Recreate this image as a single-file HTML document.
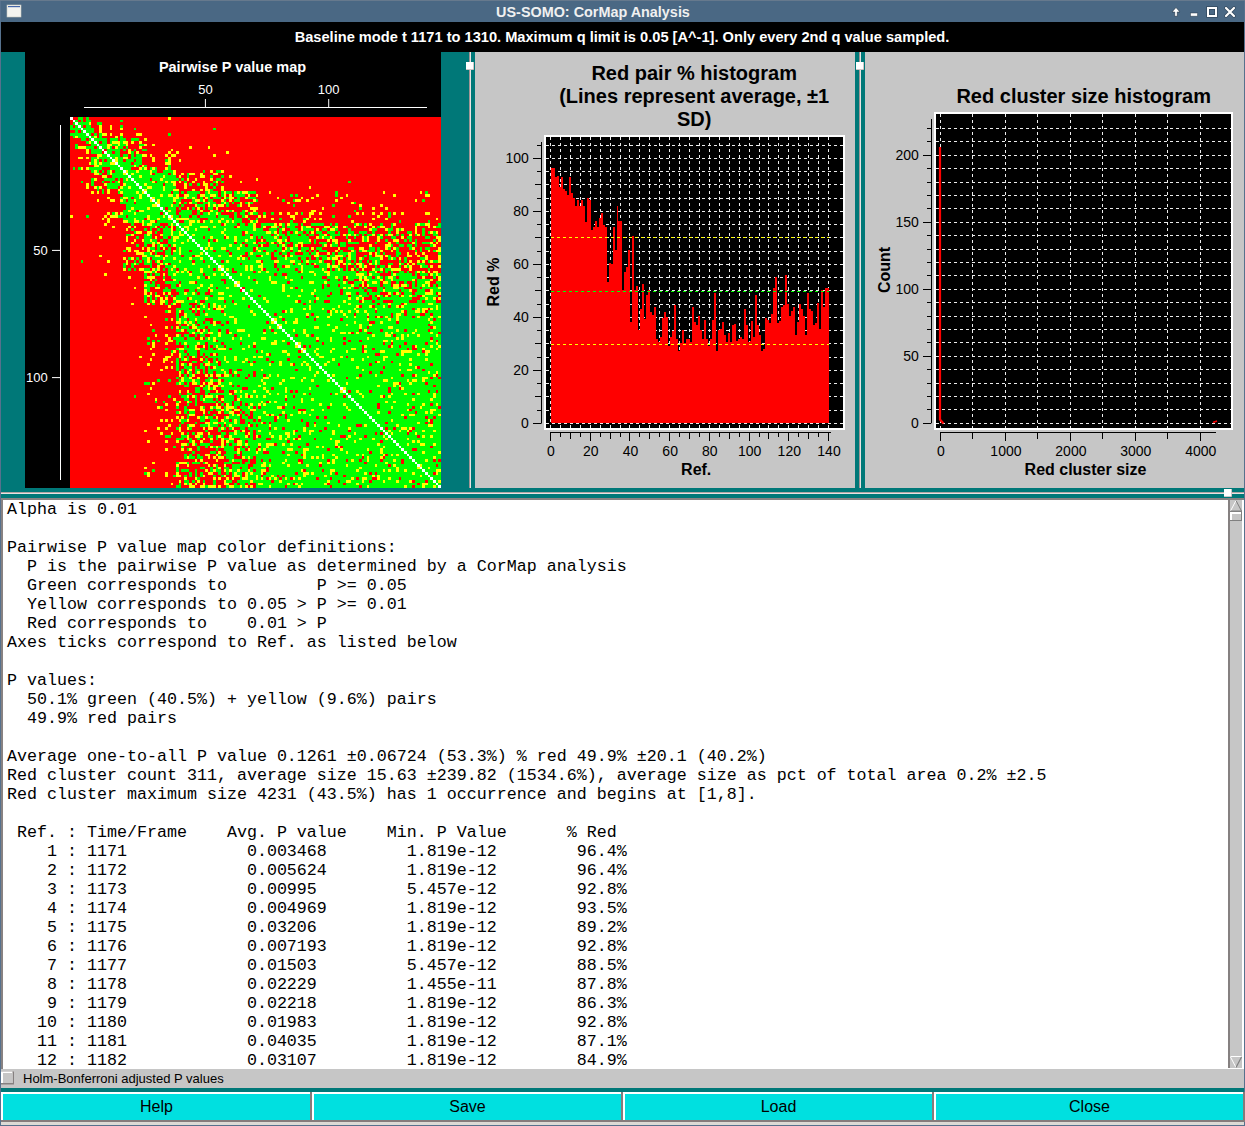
<!DOCTYPE html><html><head><meta charset="utf-8"><style>
html,body{margin:0;padding:0;width:1245px;height:1126px;overflow:hidden;background:#dcdad5}
svg{display:block}
text{white-space:pre}
.s{font-family:"Liberation Sans",sans-serif}
.m{font-family:"Liberation Mono",monospace}
</style></head><body>
<svg width="1245" height="1126" viewBox="0 0 1245 1126">

<rect x="0" y="0" width="1245" height="1126" fill="#56718d"/>
<rect x="1" y="22" width="1243" height="1103" fill="#dcdad5"/>
<rect x="1" y="1" width="1243" height="21" fill="#4a6884"/>
<rect x="0" y="0" width="1245" height="1" fill="#66798d"/>
<rect x="7" y="5" width="14" height="12" fill="#f4f4f0" stroke="#c8c8c0" stroke-width="0.6"/>
<rect x="8" y="6" width="12" height="1.2" fill="#4466aa"/>
<text class="s" x="593" y="16.5" text-anchor="middle" font-size="14.4" font-weight="bold" fill="#f0f0f0">US-SOMO: CorMap Analysis</text>
<path d="M1172 12 L1176 7.5 L1180 12 H1177.3 V16.3 H1174.7 V12 Z" fill="#fff" stroke="#1e2c3a" stroke-opacity="0.55" stroke-width="1" stroke-linejoin="round"/>
<rect x="1190.5" y="13" width="7" height="3.2" fill="#fff" stroke="#1e2c3a" stroke-opacity="0.55" stroke-width="0.8"/>
<rect x="1208" y="8" width="8" height="8" fill="none" stroke="#1e2c3a" stroke-opacity="0.55" stroke-width="3.4"/>
<rect x="1208" y="8" width="8" height="8" fill="none" stroke="#fff" stroke-width="2"/>
<path d="M1226 8 L1234 16 M1234 8 L1226 16" stroke="#1e2c3a" stroke-opacity="0.55" stroke-width="3.6" stroke-linecap="round"/>
<path d="M1226 8 L1234 16 M1234 8 L1226 16" stroke="#fff" stroke-width="2.2" stroke-linecap="round"/>
<rect x="1" y="22" width="1243" height="30" fill="#000"/>
<text class="s" x="622" y="41.7" text-anchor="middle" font-size="14.63" font-weight="bold" fill="#fff">Baseline mode t 1171 to 1310. Maximum q limit is 0.05 [A^-1]. Only every 2nd q value sampled.</text>
<rect x="1" y="52" width="1243" height="446" fill="#007878"/>
<rect x="25" y="52" width="416" height="436" fill="#000"/>
<rect x="475" y="52" width="380" height="436" fill="#c6c6c6"/>
<rect x="865" y="52" width="379" height="436" fill="#c6c6c6"/>
<rect x="469" y="52" width="1" height="436" fill="#a09494"/><rect x="470" y="52" width="1" height="436" fill="#e8e2e2"/>
<rect x="859" y="52" width="1" height="436" fill="#a09494"/><rect x="860" y="52" width="1" height="436" fill="#e8e2e2"/>
<rect x="1" y="492" width="1243" height="1" fill="#b0a4a4"/><rect x="1" y="493" width="1243" height="1" fill="#e8e2e2"/>
<g transform="translate(70 117) scale(2.65000)" shape-rendering="crispEdges">
<rect x="0" y="0" width="140" height="140" fill="#ff0000"/>
<path fill="#00ff00" d="M3 0h2v1h-2zM6 0h1v1h-1zM2 1h1v1h-1zM4 1h1v1h-1zM6 1h2v1h-2zM19 1h1v1h-1zM1 2h1v1h-1zM3 2h4v1h-4zM10 2h2v1h-2zM0 3h1v1h-1zM2 3h1v1h-1zM4 3h1v1h-1zM6 3h2v1h-2zM19 3h1v1h-1zM0 4h4v1h-4zM5 4h4v1h-4zM24 4h1v1h-1zM54 4h1v1h-1zM2 5h1v1h-1zM4 5h1v1h-1zM6 5h3v1h-3zM0 6h6v1h-6zM7 6h1v1h-1zM9 6h1v1h-1zM11 6h1v1h-1zM37 6h1v1h-1zM1 7h1v1h-1zM3 7h4v1h-4zM8 7h1v1h-1zM11 7h1v1h-1zM19 7h1v1h-1zM4 8h2v1h-2zM7 8h1v1h-1zM9 8h5v1h-5zM15 8h3v1h-3zM19 8h2v1h-2zM23 8h3v1h-3zM6 9h1v1h-1zM8 9h1v1h-1zM10 9h1v1h-1zM12 9h2v1h-2zM15 9h1v1h-1zM19 9h1v1h-1zM2 10h1v1h-1zM8 10h2v1h-2zM11 10h3v1h-3zM16 10h2v1h-2zM19 10h2v1h-2zM26 10h2v1h-2zM2 11h1v1h-1zM6 11h3v1h-3zM10 11h1v1h-1zM12 11h2v1h-2zM15 11h1v1h-1zM18 11h2v1h-2zM21 11h1v1h-1zM8 12h4v1h-4zM14 12h5v1h-5zM20 12h1v1h-1zM24 12h1v1h-1zM27 12h2v1h-2zM8 13h4v1h-4zM14 13h2v1h-2zM17 13h2v1h-2zM23 13h1v1h-1zM12 14h2v1h-2zM15 14h4v1h-4zM20 14h2v1h-2zM23 14h1v1h-1zM25 14h2v1h-2zM8 15h2v1h-2zM11 15h4v1h-4zM16 15h1v1h-1zM18 15h2v1h-2zM23 15h4v1h-4zM8 16h1v1h-1zM10 16h1v1h-1zM12 16h1v1h-1zM14 16h2v1h-2zM18 16h2v1h-2zM21 16h3v1h-3zM25 16h2v1h-2zM36 16h1v1h-1zM8 17h1v1h-1zM10 17h1v1h-1zM12 17h3v1h-3zM18 17h5v1h-5zM24 17h3v1h-3zM11 18h7v1h-7zM19 18h5v1h-5zM25 18h1v1h-1zM28 18h1v1h-1zM37 18h1v1h-1zM1 19h1v1h-1zM3 19h1v1h-1zM7 19h5v1h-5zM15 19h4v1h-4zM20 19h3v1h-3zM27 19h1v1h-1zM30 19h1v1h-1zM32 19h1v1h-1zM37 19h1v1h-1zM8 20h1v1h-1zM10 20h1v1h-1zM12 20h1v1h-1zM14 20h1v1h-1zM17 20h3v1h-3zM22 20h3v1h-3zM26 20h4v1h-4zM31 20h2v1h-2zM35 20h4v1h-4zM50 20h1v1h-1zM55 20h2v1h-2zM11 21h1v1h-1zM14 21h1v1h-1zM16 21h4v1h-4zM22 21h1v1h-1zM24 21h6v1h-6zM32 21h5v1h-5zM38 21h1v1h-1zM44 21h1v1h-1zM16 22h6v1h-6zM23 22h3v1h-3zM27 22h8v1h-8zM36 22h4v1h-4zM44 22h1v1h-1zM53 22h1v1h-1zM57 22h1v1h-1zM8 23h1v1h-1zM13 23h4v1h-4zM18 23h1v1h-1zM20 23h1v1h-1zM22 23h1v1h-1zM24 23h6v1h-6zM31 23h3v1h-3zM35 23h6v1h-6zM42 23h1v1h-1zM55 23h2v1h-2zM4 24h1v1h-1zM8 24h1v1h-1zM12 24h1v1h-1zM15 24h1v1h-1zM17 24h1v1h-1zM20 24h4v1h-4zM25 24h6v1h-6zM33 24h3v1h-3zM37 24h1v1h-1zM43 24h1v1h-1zM54 24h1v1h-1zM57 24h1v1h-1zM105 24h1v1h-1zM8 25h1v1h-1zM14 25h5v1h-5zM21 25h4v1h-4zM26 25h2v1h-2zM29 25h6v1h-6zM36 25h3v1h-3zM45 25h1v1h-1zM48 25h1v1h-1zM53 25h1v1h-1zM55 25h1v1h-1zM10 26h1v1h-1zM14 26h4v1h-4zM20 26h2v1h-2zM23 26h3v1h-3zM27 26h2v1h-2zM31 26h4v1h-4zM36 26h4v1h-4zM54 26h1v1h-1zM10 27h1v1h-1zM12 27h1v1h-1zM19 27h8v1h-8zM29 27h6v1h-6zM36 27h3v1h-3zM53 27h1v1h-1zM12 28h1v1h-1zM18 28h1v1h-1zM20 28h5v1h-5zM26 28h1v1h-1zM29 28h9v1h-9zM39 28h2v1h-2zM42 28h1v1h-1zM44 28h5v1h-5zM51 28h1v1h-1zM53 28h3v1h-3zM57 28h1v1h-1zM59 28h2v1h-2zM62 28h1v1h-1zM64 28h1v1h-1zM67 28h3v1h-3zM100 28h1v1h-1zM134 28h1v1h-1zM20 29h6v1h-6zM27 29h2v1h-2zM30 29h4v1h-4zM35 29h2v1h-2zM39 29h1v1h-1zM45 29h3v1h-3zM51 29h2v1h-2zM55 29h1v1h-1zM57 29h1v1h-1zM62 29h4v1h-4zM83 29h1v1h-1zM85 29h1v1h-1zM100 29h1v1h-1zM19 30h1v1h-1zM22 30h1v1h-1zM24 30h2v1h-2zM27 30h3v1h-3zM32 30h7v1h-7zM41 30h2v1h-2zM44 30h2v1h-2zM47 30h1v1h-1zM49 30h1v1h-1zM52 30h1v1h-1zM54 30h3v1h-3zM59 30h1v1h-1zM63 30h1v1h-1zM67 30h3v1h-3zM20 31h1v1h-1zM22 31h2v1h-2zM25 31h5v1h-5zM32 31h1v1h-1zM34 31h5v1h-5zM40 31h2v1h-2zM46 31h1v1h-1zM49 31h1v1h-1zM52 31h2v1h-2zM58 31h1v1h-1zM62 31h2v1h-2zM70 31h1v1h-1zM80 31h1v1h-1zM84 31h1v1h-1zM133 31h1v1h-1zM19 32h5v1h-5zM25 32h7v1h-7zM34 32h5v1h-5zM40 32h1v1h-1zM43 32h1v1h-1zM46 32h2v1h-2zM50 32h2v1h-2zM53 32h2v1h-2zM57 32h1v1h-1zM59 32h1v1h-1zM61 32h1v1h-1zM66 32h1v1h-1zM68 32h1v1h-1zM107 32h1v1h-1zM21 33h10v1h-10zM34 33h4v1h-4zM39 33h2v1h-2zM42 33h1v1h-1zM48 33h3v1h-3zM53 33h1v1h-1zM55 33h1v1h-1zM59 33h1v1h-1zM63 33h1v1h-1zM84 33h1v1h-1zM99 33h1v1h-1zM21 34h2v1h-2zM24 34h5v1h-5zM30 34h4v1h-4zM35 34h1v1h-1zM37 34h3v1h-3zM41 34h1v1h-1zM46 34h1v1h-1zM50 34h1v1h-1zM52 34h2v1h-2zM109 34h1v1h-1zM20 35h2v1h-2zM23 35h2v1h-2zM28 35h7v1h-7zM36 35h1v1h-1zM38 35h2v1h-2zM42 35h4v1h-4zM48 35h1v1h-1zM54 35h2v1h-2zM57 35h1v1h-1zM60 35h1v1h-1zM65 35h1v1h-1zM107 35h1v1h-1zM16 36h1v1h-1zM20 36h4v1h-4zM25 36h9v1h-9zM35 36h1v1h-1zM37 36h3v1h-3zM41 36h5v1h-5zM48 36h1v1h-1zM50 36h2v1h-2zM53 36h2v1h-2zM56 36h1v1h-1zM62 36h1v1h-1zM64 36h2v1h-2zM67 36h1v1h-1zM69 36h2v1h-2zM73 36h1v1h-1zM76 36h1v1h-1zM87 36h1v1h-1zM120 36h1v1h-1zM6 37h1v1h-1zM18 37h3v1h-3zM22 37h7v1h-7zM30 37h5v1h-5zM36 37h1v1h-1zM39 37h2v1h-2zM42 37h3v1h-3zM46 37h2v1h-2zM49 37h6v1h-6zM56 37h4v1h-4zM62 37h1v1h-1zM65 37h1v1h-1zM99 37h1v1h-1zM105 37h1v1h-1zM120 37h1v1h-1zM20 38h4v1h-4zM25 38h3v1h-3zM30 38h3v1h-3zM34 38h3v1h-3zM39 38h1v1h-1zM45 38h4v1h-4zM52 38h5v1h-5zM58 38h3v1h-3zM62 38h3v1h-3zM67 38h1v1h-1zM70 38h1v1h-1zM79 38h1v1h-1zM88 38h1v1h-1zM22 39h2v1h-2zM26 39h1v1h-1zM28 39h2v1h-2zM33 39h6v1h-6zM40 39h1v1h-1zM43 39h2v1h-2zM47 39h1v1h-1zM51 39h2v1h-2zM54 39h2v1h-2zM57 39h2v1h-2zM60 39h1v1h-1zM62 39h3v1h-3zM69 39h1v1h-1zM83 39h1v1h-1zM124 39h1v1h-1zM135 39h1v1h-1zM23 40h1v1h-1zM28 40h1v1h-1zM31 40h3v1h-3zM37 40h1v1h-1zM39 40h1v1h-1zM41 40h4v1h-4zM46 40h11v1h-11zM59 40h4v1h-4zM64 40h2v1h-2zM67 40h2v1h-2zM72 40h5v1h-5zM80 40h1v1h-1zM83 40h3v1h-3zM87 40h1v1h-1zM91 40h5v1h-5zM98 40h1v1h-1zM100 40h1v1h-1zM107 40h1v1h-1zM109 40h1v1h-1zM111 40h1v1h-1zM117 40h1v1h-1zM121 40h1v1h-1zM130 40h1v1h-1zM132 40h2v1h-2zM139 40h1v1h-1zM30 41h2v1h-2zM34 41h1v1h-1zM36 41h1v1h-1zM40 41h1v1h-1zM42 41h1v1h-1zM45 41h4v1h-4zM52 41h2v1h-2zM55 41h7v1h-7zM64 41h5v1h-5zM72 41h1v1h-1zM78 41h1v1h-1zM80 41h1v1h-1zM82 41h3v1h-3zM88 41h1v1h-1zM99 41h1v1h-1zM104 41h1v1h-1zM116 41h1v1h-1zM121 41h1v1h-1zM138 41h2v1h-2zM23 42h1v1h-1zM28 42h1v1h-1zM30 42h1v1h-1zM33 42h1v1h-1zM35 42h3v1h-3zM40 42h2v1h-2zM43 42h1v1h-1zM45 42h2v1h-2zM48 42h4v1h-4zM53 42h5v1h-5zM59 42h10v1h-10zM70 42h3v1h-3zM75 42h3v1h-3zM79 42h1v1h-1zM83 42h3v1h-3zM88 42h4v1h-4zM95 42h2v1h-2zM100 42h1v1h-1zM105 42h1v1h-1zM114 42h2v1h-2zM120 42h2v1h-2zM124 42h1v1h-1zM133 42h1v1h-1zM24 43h1v1h-1zM32 43h1v1h-1zM35 43h3v1h-3zM39 43h2v1h-2zM42 43h1v1h-1zM44 43h13v1h-13zM58 43h7v1h-7zM67 43h7v1h-7zM76 43h1v1h-1zM79 43h1v1h-1zM82 43h1v1h-1zM84 43h1v1h-1zM86 43h2v1h-2zM89 43h1v1h-1zM93 43h2v1h-2zM97 43h3v1h-3zM101 43h1v1h-1zM105 43h2v1h-2zM109 43h3v1h-3zM114 43h1v1h-1zM120 43h1v1h-1zM127 43h2v1h-2zM133 43h1v1h-1zM135 43h1v1h-1zM137 43h1v1h-1zM21 44h2v1h-2zM28 44h1v1h-1zM30 44h1v1h-1zM35 44h3v1h-3zM39 44h2v1h-2zM43 44h1v1h-1zM45 44h1v1h-1zM47 44h11v1h-11zM59 44h6v1h-6zM66 44h2v1h-2zM69 44h7v1h-7zM77 44h1v1h-1zM79 44h2v1h-2zM82 44h4v1h-4zM87 44h2v1h-2zM90 44h2v1h-2zM94 44h2v1h-2zM98 44h4v1h-4zM104 44h1v1h-1zM106 44h1v1h-1zM108 44h1v1h-1zM110 44h1v1h-1zM112 44h2v1h-2zM116 44h1v1h-1zM119 44h1v1h-1zM123 44h1v1h-1zM125 44h1v1h-1zM130 44h1v1h-1zM133 44h1v1h-1zM137 44h2v1h-2zM25 45h1v1h-1zM28 45h3v1h-3zM35 45h2v1h-2zM38 45h1v1h-1zM41 45h4v1h-4zM46 45h4v1h-4zM51 45h2v1h-2zM54 45h4v1h-4zM60 45h2v1h-2zM63 45h5v1h-5zM69 45h1v1h-1zM71 45h1v1h-1zM73 45h4v1h-4zM78 45h1v1h-1zM80 45h2v1h-2zM83 45h7v1h-7zM94 45h1v1h-1zM96 45h2v1h-2zM99 45h1v1h-1zM104 45h1v1h-1zM107 45h1v1h-1zM111 45h1v1h-1zM117 45h1v1h-1zM121 45h2v1h-2zM127 45h2v1h-2zM134 45h2v1h-2zM28 46h2v1h-2zM31 46h2v1h-2zM34 46h1v1h-1zM37 46h2v1h-2zM40 46h4v1h-4zM45 46h1v1h-1zM47 46h5v1h-5zM53 46h1v1h-1zM56 46h6v1h-6zM63 46h3v1h-3zM67 46h3v1h-3zM74 46h4v1h-4zM80 46h1v1h-1zM83 46h7v1h-7zM92 46h1v1h-1zM111 46h1v1h-1zM119 46h1v1h-1zM126 46h1v1h-1zM128 46h1v1h-1zM130 46h1v1h-1zM137 46h1v1h-1zM28 47h3v1h-3zM32 47h1v1h-1zM37 47h5v1h-5zM43 47h4v1h-4zM48 47h4v1h-4zM53 47h9v1h-9zM63 47h2v1h-2zM66 47h3v1h-3zM71 47h3v1h-3zM75 47h1v1h-1zM78 47h1v1h-1zM81 47h2v1h-2zM84 47h2v1h-2zM88 47h3v1h-3zM92 47h1v1h-1zM94 47h3v1h-3zM99 47h1v1h-1zM102 47h2v1h-2zM105 47h4v1h-4zM115 47h1v1h-1zM123 47h1v1h-1zM130 47h1v1h-1zM133 47h3v1h-3zM25 48h1v1h-1zM28 48h1v1h-1zM33 48h1v1h-1zM35 48h2v1h-2zM38 48h1v1h-1zM40 48h8v1h-8zM49 48h3v1h-3zM53 48h7v1h-7zM61 48h3v1h-3zM65 48h1v1h-1zM67 48h4v1h-4zM75 48h3v1h-3zM79 48h1v1h-1zM81 48h1v1h-1zM84 48h1v1h-1zM95 48h1v1h-1zM99 48h2v1h-2zM102 48h2v1h-2zM121 48h1v1h-1zM124 48h2v1h-2zM127 48h2v1h-2zM130 48h1v1h-1zM136 48h1v1h-1zM30 49h2v1h-2zM33 49h1v1h-1zM37 49h1v1h-1zM40 49h1v1h-1zM42 49h7v1h-7zM50 49h1v1h-1zM52 49h1v1h-1zM54 49h3v1h-3zM59 49h4v1h-4zM64 49h5v1h-5zM71 49h9v1h-9zM82 49h1v1h-1zM84 49h2v1h-2zM87 49h3v1h-3zM93 49h2v1h-2zM105 49h2v1h-2zM113 49h2v1h-2zM116 49h1v1h-1zM120 49h1v1h-1zM123 49h1v1h-1zM128 49h1v1h-1zM132 49h1v1h-1zM134 49h2v1h-2zM20 50h1v1h-1zM32 50h3v1h-3zM36 50h2v1h-2zM40 50h1v1h-1zM42 50h3v1h-3zM46 50h4v1h-4zM51 50h3v1h-3zM55 50h4v1h-4zM60 50h9v1h-9zM70 50h1v1h-1zM72 50h1v1h-1zM74 50h3v1h-3zM78 50h2v1h-2zM81 50h2v1h-2zM84 50h2v1h-2zM87 50h2v1h-2zM90 50h1v1h-1zM92 50h1v1h-1zM94 50h3v1h-3zM102 50h1v1h-1zM107 50h1v1h-1zM109 50h1v1h-1zM112 50h3v1h-3zM116 50h1v1h-1zM123 50h1v1h-1zM130 50h1v1h-1zM132 50h1v1h-1zM137 50h1v1h-1zM28 51h2v1h-2zM32 51h1v1h-1zM36 51h2v1h-2zM39 51h2v1h-2zM42 51h7v1h-7zM50 51h1v1h-1zM52 51h8v1h-8zM61 51h5v1h-5zM67 51h1v1h-1zM69 51h5v1h-5zM75 51h1v1h-1zM77 51h2v1h-2zM80 51h2v1h-2zM83 51h2v1h-2zM88 51h2v1h-2zM91 51h2v1h-2zM99 51h1v1h-1zM101 51h4v1h-4zM106 51h2v1h-2zM116 51h1v1h-1zM118 51h1v1h-1zM123 51h2v1h-2zM139 51h1v1h-1zM29 52h3v1h-3zM34 52h1v1h-1zM37 52h5v1h-5zM43 52h3v1h-3zM49 52h3v1h-3zM53 52h3v1h-3zM57 52h3v1h-3zM61 52h3v1h-3zM67 52h3v1h-3zM73 52h3v1h-3zM77 52h3v1h-3zM84 52h7v1h-7zM94 52h3v1h-3zM98 52h2v1h-2zM103 52h1v1h-1zM106 52h2v1h-2zM111 52h1v1h-1zM113 52h1v1h-1zM120 52h1v1h-1zM123 52h1v1h-1zM22 53h1v1h-1zM25 53h1v1h-1zM27 53h2v1h-2zM31 53h4v1h-4zM36 53h3v1h-3zM40 53h5v1h-5zM46 53h3v1h-3zM50 53h3v1h-3zM54 53h9v1h-9zM64 53h1v1h-1zM66 53h1v1h-1zM68 53h8v1h-8zM78 53h3v1h-3zM82 53h4v1h-4zM87 53h2v1h-2zM90 53h1v1h-1zM93 53h1v1h-1zM95 53h2v1h-2zM98 53h1v1h-1zM102 53h1v1h-1zM104 53h1v1h-1zM106 53h2v1h-2zM110 53h1v1h-1zM113 53h4v1h-4zM120 53h1v1h-1zM122 53h1v1h-1zM126 53h1v1h-1zM132 53h2v1h-2zM4 54h1v1h-1zM24 54h1v1h-1zM26 54h1v1h-1zM28 54h1v1h-1zM30 54h1v1h-1zM32 54h1v1h-1zM35 54h6v1h-6zM42 54h4v1h-4zM47 54h3v1h-3zM51 54h3v1h-3zM55 54h2v1h-2zM58 54h1v1h-1zM60 54h10v1h-10zM73 54h4v1h-4zM79 54h4v1h-4zM85 54h2v1h-2zM88 54h1v1h-1zM90 54h4v1h-4zM95 54h1v1h-1zM99 54h1v1h-1zM104 54h2v1h-2zM107 54h1v1h-1zM109 54h1v1h-1zM112 54h1v1h-1zM114 54h1v1h-1zM116 54h1v1h-1zM124 54h1v1h-1zM126 54h1v1h-1zM135 54h1v1h-1zM137 54h2v1h-2zM20 55h1v1h-1zM23 55h1v1h-1zM25 55h1v1h-1zM28 55h3v1h-3zM33 55h1v1h-1zM35 55h1v1h-1zM38 55h8v1h-8zM47 55h8v1h-8zM56 55h8v1h-8zM65 55h7v1h-7zM73 55h4v1h-4zM78 55h6v1h-6zM85 55h1v1h-1zM87 55h2v1h-2zM90 55h1v1h-1zM93 55h4v1h-4zM99 55h1v1h-1zM104 55h1v1h-1zM106 55h1v1h-1zM110 55h1v1h-1zM114 55h1v1h-1zM116 55h1v1h-1zM120 55h2v1h-2zM125 55h1v1h-1zM131 55h3v1h-3zM20 56h1v1h-1zM23 56h1v1h-1zM30 56h1v1h-1zM36 56h3v1h-3zM40 56h12v1h-12zM53 56h3v1h-3zM58 56h8v1h-8zM67 56h1v1h-1zM69 56h2v1h-2zM73 56h4v1h-4zM78 56h2v1h-2zM83 56h4v1h-4zM88 56h4v1h-4zM94 56h3v1h-3zM98 56h1v1h-1zM101 56h1v1h-1zM104 56h1v1h-1zM107 56h1v1h-1zM110 56h1v1h-1zM115 56h1v1h-1zM117 56h2v1h-2zM124 56h1v1h-1zM127 56h1v1h-1zM133 56h2v1h-2zM22 57h1v1h-1zM24 57h1v1h-1zM28 57h2v1h-2zM32 57h1v1h-1zM35 57h1v1h-1zM37 57h1v1h-1zM39 57h1v1h-1zM41 57h2v1h-2zM44 57h5v1h-5zM50 57h4v1h-4zM55 57h1v1h-1zM58 57h1v1h-1zM60 57h1v1h-1zM62 57h4v1h-4zM67 57h1v1h-1zM69 57h3v1h-3zM74 57h4v1h-4zM79 57h6v1h-6zM86 57h1v1h-1zM88 57h7v1h-7zM96 57h1v1h-1zM98 57h1v1h-1zM100 57h1v1h-1zM102 57h1v1h-1zM104 57h1v1h-1zM108 57h1v1h-1zM115 57h2v1h-2zM119 57h2v1h-2zM135 57h1v1h-1zM31 58h1v1h-1zM37 58h3v1h-3zM41 58h1v1h-1zM43 58h1v1h-1zM46 58h3v1h-3zM50 58h8v1h-8zM59 58h2v1h-2zM63 58h6v1h-6zM70 58h1v1h-1zM72 58h2v1h-2zM75 58h11v1h-11zM88 58h2v1h-2zM92 58h4v1h-4zM98 58h10v1h-10zM109 58h3v1h-3zM113 58h2v1h-2zM117 58h1v1h-1zM119 58h1v1h-1zM121 58h1v1h-1zM124 58h2v1h-2zM127 58h1v1h-1zM130 58h1v1h-1zM132 58h1v1h-1zM28 59h1v1h-1zM30 59h1v1h-1zM32 59h2v1h-2zM37 59h2v1h-2zM40 59h5v1h-5zM46 59h4v1h-4zM51 59h3v1h-3zM55 59h2v1h-2zM58 59h1v1h-1zM60 59h4v1h-4zM65 59h12v1h-12zM78 59h2v1h-2zM82 59h10v1h-10zM93 59h4v1h-4zM98 59h10v1h-10zM111 59h1v1h-1zM114 59h3v1h-3zM121 59h1v1h-1zM123 59h6v1h-6zM130 59h1v1h-1zM132 59h3v1h-3zM137 59h1v1h-1zM139 59h1v1h-1zM28 60h1v1h-1zM35 60h1v1h-1zM38 60h10v1h-10zM49 60h2v1h-2zM53 60h7v1h-7zM61 60h6v1h-6zM68 60h7v1h-7zM76 60h5v1h-5zM82 60h5v1h-5zM88 60h7v1h-7zM97 60h3v1h-3zM101 60h2v1h-2zM105 60h4v1h-4zM110 60h1v1h-1zM112 60h2v1h-2zM115 60h1v1h-1zM117 60h1v1h-1zM119 60h1v1h-1zM122 60h1v1h-1zM124 60h7v1h-7zM137 60h1v1h-1zM32 61h1v1h-1zM40 61h17v1h-17zM59 61h2v1h-2zM62 61h7v1h-7zM70 61h5v1h-5zM76 61h7v1h-7zM84 61h13v1h-13zM98 61h3v1h-3zM102 61h1v1h-1zM105 61h2v1h-2zM113 61h4v1h-4zM119 61h2v1h-2zM122 61h7v1h-7zM131 61h5v1h-5zM28 62h2v1h-2zM31 62h1v1h-1zM36 62h5v1h-5zM42 62h3v1h-3zM48 62h10v1h-10zM59 62h3v1h-3zM64 62h6v1h-6zM71 62h5v1h-5zM78 62h4v1h-4zM83 62h7v1h-7zM92 62h4v1h-4zM97 62h6v1h-6zM104 62h1v1h-1zM107 62h3v1h-3zM112 62h2v1h-2zM116 62h1v1h-1zM120 62h1v1h-1zM123 62h1v1h-1zM126 62h1v1h-1zM129 62h1v1h-1zM131 62h3v1h-3zM138 62h2v1h-2zM29 63h3v1h-3zM33 63h1v1h-1zM38 63h2v1h-2zM42 63h7v1h-7zM50 63h3v1h-3zM54 63h8v1h-8zM64 63h16v1h-16zM81 63h14v1h-14zM96 63h1v1h-1zM98 63h3v1h-3zM102 63h4v1h-4zM107 63h2v1h-2zM113 63h4v1h-4zM118 63h3v1h-3zM127 63h1v1h-1zM129 63h1v1h-1zM131 63h2v1h-2zM134 63h1v1h-1zM137 63h1v1h-1zM139 63h1v1h-1zM28 64h2v1h-2zM36 64h1v1h-1zM38 64h10v1h-10zM49 64h3v1h-3zM53 64h2v1h-2zM56 64h3v1h-3zM60 64h4v1h-4zM66 64h14v1h-14zM81 64h2v1h-2zM84 64h1v1h-1zM86 64h9v1h-9zM96 64h7v1h-7zM104 64h1v1h-1zM106 64h1v1h-1zM109 64h1v1h-1zM111 64h1v1h-1zM116 64h2v1h-2zM119 64h3v1h-3zM124 64h2v1h-2zM129 64h3v1h-3zM133 64h6v1h-6zM29 65h1v1h-1zM35 65h3v1h-3zM40 65h3v1h-3zM45 65h2v1h-2zM48 65h4v1h-4zM54 65h10v1h-10zM66 65h2v1h-2zM69 65h11v1h-11zM81 65h6v1h-6zM88 65h4v1h-4zM93 65h9v1h-9zM103 65h8v1h-8zM112 65h2v1h-2zM116 65h2v1h-2zM119 65h5v1h-5zM125 65h3v1h-3zM131 65h3v1h-3zM137 65h3v1h-3zM32 66h1v1h-1zM41 66h2v1h-2zM44 66h2v1h-2zM47 66h1v1h-1zM49 66h2v1h-2zM53 66h3v1h-3zM58 66h8v1h-8zM67 66h24v1h-24zM92 66h6v1h-6zM99 66h3v1h-3zM103 66h1v1h-1zM106 66h2v1h-2zM109 66h3v1h-3zM113 66h4v1h-4zM121 66h1v1h-1zM124 66h1v1h-1zM126 66h3v1h-3zM130 66h4v1h-4zM137 66h1v1h-1zM28 67h1v1h-1zM30 67h1v1h-1zM36 67h1v1h-1zM38 67h1v1h-1zM40 67h13v1h-13zM54 67h6v1h-6zM61 67h6v1h-6zM68 67h3v1h-3zM72 67h10v1h-10zM83 67h3v1h-3zM87 67h5v1h-5zM93 67h4v1h-4zM98 67h7v1h-7zM106 67h3v1h-3zM110 67h3v1h-3zM114 67h1v1h-1zM117 67h1v1h-1zM121 67h3v1h-3zM126 67h2v1h-2zM129 67h2v1h-2zM134 67h5v1h-5zM28 68h1v1h-1zM30 68h1v1h-1zM32 68h1v1h-1zM40 68h4v1h-4zM46 68h5v1h-5zM52 68h4v1h-4zM58 68h7v1h-7zM66 68h2v1h-2zM69 68h4v1h-4zM74 68h19v1h-19zM94 68h11v1h-11zM106 68h2v1h-2zM109 68h1v1h-1zM114 68h2v1h-2zM117 68h12v1h-12zM132 68h2v1h-2zM135 68h2v1h-2zM28 69h1v1h-1zM30 69h1v1h-1zM36 69h1v1h-1zM39 69h1v1h-1zM43 69h4v1h-4zM48 69h1v1h-1zM51 69h7v1h-7zM59 69h2v1h-2zM62 69h7v1h-7zM70 69h4v1h-4zM75 69h10v1h-10zM87 69h3v1h-3zM91 69h1v1h-1zM93 69h3v1h-3zM98 69h5v1h-5zM104 69h5v1h-5zM111 69h3v1h-3zM115 69h3v1h-3zM122 69h6v1h-6zM131 69h2v1h-2zM134 69h4v1h-4zM31 70h1v1h-1zM36 70h1v1h-1zM38 70h1v1h-1zM42 70h3v1h-3zM48 70h1v1h-1zM50 70h2v1h-2zM53 70h1v1h-1zM55 70h7v1h-7zM63 70h7v1h-7zM71 70h17v1h-17zM89 70h16v1h-16zM106 70h10v1h-10zM117 70h3v1h-3zM121 70h4v1h-4zM127 70h8v1h-8zM137 70h3v1h-3zM42 71h4v1h-4zM47 71h1v1h-1zM49 71h1v1h-1zM51 71h1v1h-1zM53 71h1v1h-1zM55 71h1v1h-1zM57 71h1v1h-1zM59 71h8v1h-8zM68 71h3v1h-3zM72 71h18v1h-18zM91 71h10v1h-10zM102 71h6v1h-6zM110 71h3v1h-3zM115 71h3v1h-3zM119 71h1v1h-1zM121 71h2v1h-2zM126 71h12v1h-12zM139 71h1v1h-1zM40 72h5v1h-5zM47 72h1v1h-1zM49 72h3v1h-3zM53 72h1v1h-1zM58 72h14v1h-14zM73 72h10v1h-10zM84 72h4v1h-4zM89 72h1v1h-1zM91 72h4v1h-4zM96 72h3v1h-3zM100 72h7v1h-7zM108 72h7v1h-7zM116 72h13v1h-13zM130 72h1v1h-1zM132 72h1v1h-1zM137 72h1v1h-1zM139 72h1v1h-1zM36 73h1v1h-1zM40 73h1v1h-1zM43 73h3v1h-3zM47 73h1v1h-1zM49 73h1v1h-1zM51 73h6v1h-6zM58 73h10v1h-10zM69 73h4v1h-4zM74 73h6v1h-6zM82 73h1v1h-1zM84 73h13v1h-13zM99 73h1v1h-1zM101 73h1v1h-1zM103 73h2v1h-2zM106 73h2v1h-2zM109 73h2v1h-2zM112 73h3v1h-3zM116 73h9v1h-9zM127 73h3v1h-3zM132 73h1v1h-1zM135 73h5v1h-5zM40 74h1v1h-1zM44 74h3v1h-3zM49 74h2v1h-2zM52 74h6v1h-6zM59 74h10v1h-10zM70 74h4v1h-4zM75 74h2v1h-2zM78 74h11v1h-11zM90 74h1v1h-1zM92 74h6v1h-6zM99 74h4v1h-4zM104 74h3v1h-3zM108 74h4v1h-4zM113 74h8v1h-8zM122 74h1v1h-1zM125 74h1v1h-1zM127 74h5v1h-5zM134 74h2v1h-2zM137 74h3v1h-3zM40 75h1v1h-1zM42 75h1v1h-1zM44 75h16v1h-16zM62 75h13v1h-13zM76 75h3v1h-3zM80 75h9v1h-9zM90 75h3v1h-3zM94 75h3v1h-3zM98 75h6v1h-6zM105 75h2v1h-2zM108 75h4v1h-4zM113 75h2v1h-2zM118 75h1v1h-1zM120 75h1v1h-1zM122 75h1v1h-1zM124 75h5v1h-5zM130 75h1v1h-1zM132 75h4v1h-4zM137 75h2v1h-2zM36 76h1v1h-1zM40 76h1v1h-1zM42 76h2v1h-2zM45 76h2v1h-2zM48 76h3v1h-3zM54 76h8v1h-8zM63 76h13v1h-13zM78 76h2v1h-2zM81 76h4v1h-4zM86 76h6v1h-6zM93 76h9v1h-9zM103 76h9v1h-9zM113 76h7v1h-7zM121 76h2v1h-2zM124 76h11v1h-11zM136 76h1v1h-1zM138 76h2v1h-2zM42 77h1v1h-1zM44 77h1v1h-1zM46 77h1v1h-1zM48 77h2v1h-2zM51 77h2v1h-2zM57 77h2v1h-2zM60 77h2v1h-2zM63 77h11v1h-11zM75 77h1v1h-1zM78 77h3v1h-3zM82 77h2v1h-2zM86 77h21v1h-21zM108 77h5v1h-5zM115 77h2v1h-2zM118 77h5v1h-5zM124 77h12v1h-12zM137 77h3v1h-3zM41 78h1v1h-1zM45 78h1v1h-1zM47 78h1v1h-1zM49 78h5v1h-5zM55 78h2v1h-2zM58 78h20v1h-20zM80 78h17v1h-17zM98 78h6v1h-6zM105 78h4v1h-4zM110 78h3v1h-3zM114 78h21v1h-21zM136 78h4v1h-4zM38 79h1v1h-1zM42 79h3v1h-3zM48 79h3v1h-3zM52 79h23v1h-23zM76 79h2v1h-2zM80 79h12v1h-12zM94 79h6v1h-6zM101 79h8v1h-8zM110 79h2v1h-2zM113 79h7v1h-7zM122 79h14v1h-14zM138 79h2v1h-2zM31 80h1v1h-1zM40 80h2v1h-2zM44 80h3v1h-3zM51 80h1v1h-1zM53 80h3v1h-3zM57 80h2v1h-2zM60 80h3v1h-3zM66 80h7v1h-7zM74 80h2v1h-2zM77 80h3v1h-3zM81 80h3v1h-3zM85 80h3v1h-3zM89 80h10v1h-10zM100 80h9v1h-9zM110 80h1v1h-1zM112 80h5v1h-5zM118 80h5v1h-5zM124 80h2v1h-2zM127 80h3v1h-3zM131 80h4v1h-4zM136 80h4v1h-4zM45 81h1v1h-1zM47 81h2v1h-2zM50 81h2v1h-2zM54 81h2v1h-2zM57 81h2v1h-2zM61 81h12v1h-12zM74 81h3v1h-3zM78 81h3v1h-3zM82 81h6v1h-6zM89 81h13v1h-13zM104 81h1v1h-1zM107 81h1v1h-1zM109 81h3v1h-3zM114 81h5v1h-5zM120 81h1v1h-1zM122 81h7v1h-7zM130 81h6v1h-6zM137 81h2v1h-2zM41 82h1v1h-1zM43 82h2v1h-2zM47 82h1v1h-1zM49 82h2v1h-2zM53 82h3v1h-3zM57 82h5v1h-5zM63 82h4v1h-4zM68 82h14v1h-14zM83 82h2v1h-2zM86 82h3v1h-3zM90 82h1v1h-1zM92 82h22v1h-22zM115 82h4v1h-4zM121 82h1v1h-1zM123 82h2v1h-2zM126 82h1v1h-1zM128 82h3v1h-3zM132 82h6v1h-6zM139 82h1v1h-1zM29 83h1v1h-1zM39 83h4v1h-4zM44 83h3v1h-3zM51 83h1v1h-1zM53 83h1v1h-1zM55 83h6v1h-6zM62 83h2v1h-2zM65 83h7v1h-7zM74 83h9v1h-9zM84 83h9v1h-9zM94 83h4v1h-4zM99 83h4v1h-4zM104 83h8v1h-8zM113 83h10v1h-10zM124 83h1v1h-1zM126 83h10v1h-10zM137 83h3v1h-3zM31 84h1v1h-1zM33 84h1v1h-1zM40 84h14v1h-14zM56 84h21v1h-21zM78 84h2v1h-2zM81 84h3v1h-3zM85 84h8v1h-8zM94 84h4v1h-4zM99 84h6v1h-6zM106 84h3v1h-3zM110 84h8v1h-8zM120 84h1v1h-1zM122 84h14v1h-14zM137 84h1v1h-1zM139 84h1v1h-1zM29 85h1v1h-1zM40 85h1v1h-1zM42 85h1v1h-1zM44 85h4v1h-4zM49 85h2v1h-2zM52 85h5v1h-5zM58 85h6v1h-6zM65 85h4v1h-4zM70 85h6v1h-6zM78 85h4v1h-4zM83 85h2v1h-2zM87 85h8v1h-8zM96 85h7v1h-7zM104 85h14v1h-14zM119 85h2v1h-2zM122 85h4v1h-4zM127 85h7v1h-7zM135 85h3v1h-3zM139 85h1v1h-1zM43 86h1v1h-1zM45 86h2v1h-2zM52 86h1v1h-1zM54 86h1v1h-1zM56 86h2v1h-2zM59 86h8v1h-8zM68 86h1v1h-1zM70 86h15v1h-15zM87 86h1v1h-1zM89 86h1v1h-1zM91 86h19v1h-19zM112 86h8v1h-8zM122 86h2v1h-2zM125 86h4v1h-4zM131 86h5v1h-5zM137 86h2v1h-2zM36 87h1v1h-1zM40 87h1v1h-1zM43 87h4v1h-4zM49 87h2v1h-2zM52 87h2v1h-2zM55 87h1v1h-1zM59 87h1v1h-1zM61 87h4v1h-4zM66 87h21v1h-21zM89 87h4v1h-4zM94 87h5v1h-5zM100 87h6v1h-6zM108 87h2v1h-2zM111 87h3v1h-3zM115 87h12v1h-12zM128 87h1v1h-1zM131 87h2v1h-2zM134 87h4v1h-4zM139 87h1v1h-1zM38 88h1v1h-1zM41 88h2v1h-2zM44 88h4v1h-4zM49 88h21v1h-21zM71 88h1v1h-1zM73 88h7v1h-7zM82 88h4v1h-4zM89 88h3v1h-3zM93 88h5v1h-5zM99 88h5v1h-5zM105 88h5v1h-5zM112 88h5v1h-5zM119 88h6v1h-6zM129 88h4v1h-4zM136 88h4v1h-4zM42 89h2v1h-2zM45 89h3v1h-3zM49 89h1v1h-1zM51 89h2v1h-2zM56 89h18v1h-18zM76 89h6v1h-6zM83 89h6v1h-6zM90 89h3v1h-3zM94 89h21v1h-21zM117 89h6v1h-6zM124 89h1v1h-1zM126 89h5v1h-5zM132 89h2v1h-2zM135 89h5v1h-5zM42 90h1v1h-1zM44 90h1v1h-1zM47 90h1v1h-1zM50 90h1v1h-1zM52 90h6v1h-6zM59 90h3v1h-3zM63 90h6v1h-6zM70 90h1v1h-1zM73 90h13v1h-13zM87 90h3v1h-3zM91 90h3v1h-3zM96 90h6v1h-6zM103 90h1v1h-1zM105 90h7v1h-7zM113 90h5v1h-5zM120 90h20v1h-20zM40 91h1v1h-1zM42 91h1v1h-1zM44 91h1v1h-1zM51 91h1v1h-1zM54 91h1v1h-1zM56 91h2v1h-2zM59 91h3v1h-3zM63 91h3v1h-3zM67 91h7v1h-7zM75 91h7v1h-7zM83 91h8v1h-8zM92 91h7v1h-7zM100 91h6v1h-6zM107 91h3v1h-3zM111 91h7v1h-7zM119 91h9v1h-9zM129 91h5v1h-5zM135 91h5v1h-5zM40 92h1v1h-1zM46 92h2v1h-2zM50 92h2v1h-2zM54 92h1v1h-1zM57 92h2v1h-2zM60 92h5v1h-5zM66 92h1v1h-1zM68 92h1v1h-1zM70 92h6v1h-6zM77 92h2v1h-2zM80 92h8v1h-8zM89 92h3v1h-3zM93 92h4v1h-4zM98 92h17v1h-17zM117 92h4v1h-4zM122 92h18v1h-18zM40 93h1v1h-1zM43 93h1v1h-1zM49 93h1v1h-1zM53 93h3v1h-3zM57 93h11v1h-11zM69 93h6v1h-6zM76 93h3v1h-3zM80 93h3v1h-3zM85 93h2v1h-2zM88 93h1v1h-1zM90 93h3v1h-3zM94 93h2v1h-2zM97 93h4v1h-4zM102 93h11v1h-11zM114 93h10v1h-10zM125 93h3v1h-3zM129 93h7v1h-7zM137 93h3v1h-3zM40 94h1v1h-1zM43 94h3v1h-3zM47 94h1v1h-1zM49 94h2v1h-2zM52 94h1v1h-1zM55 94h35v1h-35zM91 94h3v1h-3zM95 94h13v1h-13zM109 94h9v1h-9zM119 94h11v1h-11zM132 94h8v1h-8zM40 95h1v1h-1zM42 95h1v1h-1zM44 95h1v1h-1zM47 95h2v1h-2zM50 95h1v1h-1zM52 95h5v1h-5zM58 95h2v1h-2zM61 95h2v1h-2zM65 95h7v1h-7zM73 95h12v1h-12zM86 95h4v1h-4zM91 95h4v1h-4zM96 95h14v1h-14zM111 95h13v1h-13zM125 95h2v1h-2zM129 95h4v1h-4zM134 95h6v1h-6zM42 96h1v1h-1zM45 96h1v1h-1zM47 96h1v1h-1zM50 96h1v1h-1zM52 96h2v1h-2zM55 96h3v1h-3zM59 96h1v1h-1zM61 96h1v1h-1zM63 96h6v1h-6zM70 96h23v1h-23zM94 96h2v1h-2zM97 96h16v1h-16zM114 96h3v1h-3zM118 96h17v1h-17zM136 96h2v1h-2zM139 96h1v1h-1zM43 97h1v1h-1zM45 97h1v1h-1zM60 97h1v1h-1zM62 97h1v1h-1zM64 97h3v1h-3zM68 97h1v1h-1zM70 97h3v1h-3zM74 97h1v1h-1zM76 97h2v1h-2zM79 97h13v1h-13zM93 97h4v1h-4zM98 97h1v1h-1zM100 97h9v1h-9zM110 97h5v1h-5zM116 97h9v1h-9zM126 97h3v1h-3zM131 97h6v1h-6zM139 97h1v1h-1zM40 98h1v1h-1zM43 98h2v1h-2zM52 98h2v1h-2zM56 98h10v1h-10zM67 98h6v1h-6zM75 98h8v1h-8zM85 98h3v1h-3zM89 98h9v1h-9zM99 98h5v1h-5zM105 98h3v1h-3zM109 98h12v1h-12zM122 98h11v1h-11zM135 98h1v1h-1zM137 98h2v1h-2zM33 99h1v1h-1zM37 99h1v1h-1zM41 99h1v1h-1zM43 99h3v1h-3zM47 99h2v1h-2zM51 99h2v1h-2zM54 99h2v1h-2zM58 99h14v1h-14zM73 99h7v1h-7zM81 99h6v1h-6zM88 99h3v1h-3zM92 99h5v1h-5zM98 99h1v1h-1zM100 99h18v1h-18zM120 99h7v1h-7zM128 99h1v1h-1zM131 99h2v1h-2zM134 99h6v1h-6zM28 100h2v1h-2zM40 100h1v1h-1zM42 100h1v1h-1zM44 100h1v1h-1zM48 100h1v1h-1zM57 100h3v1h-3zM61 100h12v1h-12zM74 100h5v1h-5zM80 100h20v1h-20zM101 100h3v1h-3zM105 100h17v1h-17zM125 100h3v1h-3zM129 100h5v1h-5zM135 100h5v1h-5zM43 101h2v1h-2zM51 101h1v1h-1zM56 101h1v1h-1zM58 101h3v1h-3zM62 101h1v1h-1zM64 101h7v1h-7zM72 101h21v1h-21zM94 101h7v1h-7zM102 101h14v1h-14zM117 101h5v1h-5zM123 101h1v1h-1zM125 101h12v1h-12zM138 101h2v1h-2zM47 102h2v1h-2zM50 102h2v1h-2zM53 102h1v1h-1zM57 102h8v1h-8zM67 102h6v1h-6zM74 102h2v1h-2zM77 102h4v1h-4zM82 102h8v1h-8zM91 102h11v1h-11zM104 102h16v1h-16zM121 102h3v1h-3zM126 102h14v1h-14zM47 103h2v1h-2zM51 103h2v1h-2zM58 103h2v1h-2zM63 103h1v1h-1zM65 103h4v1h-4zM70 103h4v1h-4zM75 103h6v1h-6zM82 103h1v1h-1zM84 103h1v1h-1zM86 103h16v1h-16zM104 103h1v1h-1zM106 103h2v1h-2zM109 103h4v1h-4zM114 103h6v1h-6zM121 103h14v1h-14zM136 103h2v1h-2zM139 103h1v1h-1zM41 104h1v1h-1zM44 104h2v1h-2zM51 104h1v1h-1zM53 104h7v1h-7zM62 104h4v1h-4zM67 104h8v1h-8zM76 104h2v1h-2zM79 104h9v1h-9zM89 104h1v1h-1zM91 104h7v1h-7zM99 104h1v1h-1zM101 104h3v1h-3zM105 104h4v1h-4zM110 104h11v1h-11zM122 104h4v1h-4zM127 104h2v1h-2zM130 104h1v1h-1zM132 104h5v1h-5zM138 104h2v1h-2zM24 105h1v1h-1zM37 105h1v1h-1zM42 105h2v1h-2zM47 105h1v1h-1zM49 105h1v1h-1zM54 105h1v1h-1zM58 105h4v1h-4zM63 105h1v1h-1zM65 105h1v1h-1zM69 105h1v1h-1zM71 105h2v1h-2zM74 105h7v1h-7zM82 105h2v1h-2zM85 105h18v1h-18zM104 105h1v1h-1zM106 105h4v1h-4zM111 105h6v1h-6zM119 105h1v1h-1zM121 105h16v1h-16zM138 105h2v1h-2zM43 106h2v1h-2zM47 106h1v1h-1zM49 106h1v1h-1zM51 106h3v1h-3zM55 106h1v1h-1zM58 106h4v1h-4zM64 106h17v1h-17zM82 106h5v1h-5zM88 106h3v1h-3zM92 106h14v1h-14zM107 106h22v1h-22zM130 106h6v1h-6zM137 106h3v1h-3zM32 107h1v1h-1zM35 107h1v1h-1zM40 107h1v1h-1zM45 107h1v1h-1zM47 107h1v1h-1zM50 107h5v1h-5zM56 107h1v1h-1zM58 107h3v1h-3zM62 107h2v1h-2zM65 107h7v1h-7zM73 107h1v1h-1zM76 107h1v1h-1zM78 107h9v1h-9zM88 107h19v1h-19zM108 107h11v1h-11zM120 107h2v1h-2zM123 107h17v1h-17zM44 108h1v1h-1zM47 108h1v1h-1zM57 108h1v1h-1zM60 108h1v1h-1zM62 108h2v1h-2zM65 108h1v1h-1zM67 108h1v1h-1zM69 108h2v1h-2zM72 108h1v1h-1zM74 108h7v1h-7zM82 108h12v1h-12zM95 108h3v1h-3zM99 108h4v1h-4zM104 108h4v1h-4zM109 108h7v1h-7zM117 108h10v1h-10zM128 108h5v1h-5zM134 108h2v1h-2zM137 108h1v1h-1zM139 108h1v1h-1zM34 109h1v1h-1zM40 109h1v1h-1zM43 109h1v1h-1zM50 109h1v1h-1zM54 109h1v1h-1zM58 109h1v1h-1zM62 109h1v1h-1zM64 109h3v1h-3zM68 109h1v1h-1zM70 109h1v1h-1zM72 109h6v1h-6zM81 109h3v1h-3zM85 109h12v1h-12zM98 109h6v1h-6zM105 109h4v1h-4zM110 109h6v1h-6zM117 109h4v1h-4zM122 109h7v1h-7zM130 109h2v1h-2zM133 109h6v1h-6zM43 110h2v1h-2zM53 110h1v1h-1zM55 110h2v1h-2zM58 110h1v1h-1zM60 110h1v1h-1zM65 110h3v1h-3zM70 110h16v1h-16zM89 110h2v1h-2zM92 110h3v1h-3zM96 110h9v1h-9zM106 110h4v1h-4zM111 110h16v1h-16zM129 110h7v1h-7zM138 110h2v1h-2zM40 111h1v1h-1zM43 111h1v1h-1zM45 111h2v1h-2zM52 111h1v1h-1zM58 111h2v1h-2zM64 111h1v1h-1zM66 111h2v1h-2zM69 111h4v1h-4zM74 111h6v1h-6zM81 111h5v1h-5zM87 111h1v1h-1zM89 111h22v1h-22zM112 111h4v1h-4zM117 111h3v1h-3zM121 111h9v1h-9zM131 111h3v1h-3zM135 111h1v1h-1zM137 111h3v1h-3zM44 112h1v1h-1zM50 112h1v1h-1zM54 112h1v1h-1zM60 112h1v1h-1zM62 112h1v1h-1zM65 112h1v1h-1zM67 112h1v1h-1zM69 112h5v1h-5zM77 112h2v1h-2zM80 112h1v1h-1zM82 112h1v1h-1zM84 112h6v1h-6zM91 112h21v1h-21zM113 112h12v1h-12zM126 112h2v1h-2zM130 112h9v1h-9zM44 113h1v1h-1zM49 113h2v1h-2zM52 113h2v1h-2zM58 113h1v1h-1zM60 113h4v1h-4zM65 113h2v1h-2zM69 113h2v1h-2zM72 113h5v1h-5zM79 113h2v1h-2zM82 113h11v1h-11zM94 113h2v1h-2zM97 113h6v1h-6zM104 113h9v1h-9zM114 113h12v1h-12zM127 113h7v1h-7zM135 113h2v1h-2zM138 113h2v1h-2zM42 114h2v1h-2zM49 114h2v1h-2zM53 114h3v1h-3zM58 114h2v1h-2zM61 114h1v1h-1zM63 114h1v1h-1zM66 114h3v1h-3zM70 114h1v1h-1zM72 114h5v1h-5zM78 114h4v1h-4zM83 114h4v1h-4zM88 114h26v1h-26zM115 114h6v1h-6zM122 114h13v1h-13zM137 114h3v1h-3zM42 115h1v1h-1zM47 115h1v1h-1zM53 115h1v1h-1zM56 115h2v1h-2zM59 115h3v1h-3zM63 115h1v1h-1zM66 115h1v1h-1zM68 115h4v1h-4zM74 115h1v1h-1zM76 115h13v1h-13zM90 115h2v1h-2zM93 115h4v1h-4zM98 115h17v1h-17zM116 115h3v1h-3zM120 115h11v1h-11zM132 115h2v1h-2zM135 115h1v1h-1zM137 115h3v1h-3zM41 116h1v1h-1zM44 116h1v1h-1zM49 116h3v1h-3zM53 116h3v1h-3zM57 116h1v1h-1zM59 116h1v1h-1zM61 116h6v1h-6zM69 116h1v1h-1zM71 116h4v1h-4zM76 116h13v1h-13zM90 116h2v1h-2zM93 116h8v1h-8zM102 116h6v1h-6zM110 116h1v1h-1zM112 116h4v1h-4zM117 116h6v1h-6zM124 116h11v1h-11zM137 116h3v1h-3zM40 117h1v1h-1zM45 117h1v1h-1zM56 117h1v1h-1zM58 117h1v1h-1zM60 117h1v1h-1zM64 117h2v1h-2zM67 117h8v1h-8zM76 117h1v1h-1zM78 117h2v1h-2zM81 117h7v1h-7zM89 117h7v1h-7zM97 117h8v1h-8zM106 117h11v1h-11zM118 117h1v1h-1zM120 117h2v1h-2zM123 117h2v1h-2zM127 117h1v1h-1zM130 117h10v1h-10zM51 118h1v1h-1zM56 118h1v1h-1zM63 118h1v1h-1zM68 118h1v1h-1zM70 118h1v1h-1zM72 118h12v1h-12zM86 118h2v1h-2zM89 118h1v1h-1zM92 118h2v1h-2zM95 118h4v1h-4zM100 118h5v1h-5zM106 118h12v1h-12zM119 118h1v1h-1zM121 118h3v1h-3zM125 118h2v1h-2zM129 118h4v1h-4zM134 118h3v1h-3zM138 118h2v1h-2zM44 119h1v1h-1zM46 119h1v1h-1zM57 119h2v1h-2zM60 119h2v1h-2zM63 119h3v1h-3zM68 119h1v1h-1zM70 119h5v1h-5zM76 119h5v1h-5zM83 119h1v1h-1zM85 119h5v1h-5zM91 119h8v1h-8zM100 119h7v1h-7zM108 119h7v1h-7zM116 119h1v1h-1zM118 119h1v1h-1zM120 119h1v1h-1zM122 119h5v1h-5zM128 119h2v1h-2zM131 119h9v1h-9zM36 120h2v1h-2zM42 120h2v1h-2zM49 120h1v1h-1zM52 120h2v1h-2zM55 120h1v1h-1zM57 120h1v1h-1zM61 120h5v1h-5zM68 120h1v1h-1zM72 120h4v1h-4zM77 120h2v1h-2zM80 120h2v1h-2zM83 120h3v1h-3zM87 120h15v1h-15zM104 120h1v1h-1zM106 120h5v1h-5zM112 120h6v1h-6zM119 120h1v1h-1zM121 120h10v1h-10zM132 120h1v1h-1zM134 120h2v1h-2zM137 120h3v1h-3zM40 121h3v1h-3zM45 121h1v1h-1zM48 121h1v1h-1zM55 121h1v1h-1zM58 121h2v1h-2zM64 121h5v1h-5zM70 121h4v1h-4zM76 121h3v1h-3zM80 121h1v1h-1zM82 121h2v1h-2zM87 121h5v1h-5zM93 121h5v1h-5zM99 121h5v1h-5zM105 121h4v1h-4zM110 121h4v1h-4zM115 121h4v1h-4zM120 121h1v1h-1zM122 121h5v1h-5zM128 121h12v1h-12zM45 122h1v1h-1zM53 122h1v1h-1zM60 122h2v1h-2zM65 122h1v1h-1zM67 122h15v1h-15zM83 122h17v1h-17zM102 122h5v1h-5zM108 122h9v1h-9zM118 122h4v1h-4zM123 122h6v1h-6zM130 122h1v1h-1zM132 122h8v1h-8zM44 123h1v1h-1zM47 123h1v1h-1zM49 123h4v1h-4zM59 123h1v1h-1zM61 123h2v1h-2zM65 123h1v1h-1zM67 123h4v1h-4zM72 123h2v1h-2zM78 123h2v1h-2zM81 123h2v1h-2zM84 123h5v1h-5zM90 123h10v1h-10zM101 123h15v1h-15zM117 123h6v1h-6zM124 123h3v1h-3zM128 123h4v1h-4zM134 123h3v1h-3zM138 123h2v1h-2zM39 124h1v1h-1zM42 124h1v1h-1zM48 124h1v1h-1zM51 124h1v1h-1zM54 124h1v1h-1zM56 124h1v1h-1zM58 124h4v1h-4zM64 124h1v1h-1zM66 124h1v1h-1zM68 124h3v1h-3zM72 124h2v1h-2zM75 124h11v1h-11zM87 124h6v1h-6zM94 124h1v1h-1zM96 124h4v1h-4zM103 124h15v1h-15zM119 124h5v1h-5zM125 124h11v1h-11zM137 124h3v1h-3zM44 125h1v1h-1zM48 125h1v1h-1zM55 125h1v1h-1zM58 125h4v1h-4zM64 125h2v1h-2zM68 125h2v1h-2zM72 125h1v1h-1zM74 125h8v1h-8zM84 125h4v1h-4zM90 125h7v1h-7zM98 125h4v1h-4zM103 125h9v1h-9zM113 125h4v1h-4zM118 125h7v1h-7zM126 125h3v1h-3zM131 125h9v1h-9zM46 126h1v1h-1zM53 126h2v1h-2zM59 126h4v1h-4zM65 126h5v1h-5zM71 126h2v1h-2zM75 126h5v1h-5zM81 126h4v1h-4zM86 126h2v1h-2zM89 126h15v1h-15zM105 126h8v1h-8zM114 126h3v1h-3zM118 126h8v1h-8zM127 126h6v1h-6zM134 126h5v1h-5zM43 127h1v1h-1zM45 127h1v1h-1zM48 127h1v1h-1zM56 127h1v1h-1zM58 127h4v1h-4zM63 127h1v1h-1zM65 127h17v1h-17zM83 127h4v1h-4zM89 127h6v1h-6zM96 127h3v1h-3zM100 127h8v1h-8zM109 127h1v1h-1zM111 127h7v1h-7zM120 127h1v1h-1zM122 127h1v1h-1zM124 127h3v1h-3zM128 127h12v1h-12zM43 128h1v1h-1zM45 128h2v1h-2zM48 128h2v1h-2zM59 128h3v1h-3zM66 128h1v1h-1zM68 128h1v1h-1zM70 128h18v1h-18zM89 128h2v1h-2zM92 128h1v1h-1zM94 128h1v1h-1zM96 128h4v1h-4zM101 128h9v1h-9zM111 128h1v1h-1zM113 128h4v1h-4zM119 128h9v1h-9zM129 128h8v1h-8zM138 128h2v1h-2zM60 129h1v1h-1zM62 129h3v1h-3zM67 129h1v1h-1zM70 129h2v1h-2zM73 129h2v1h-2zM76 129h5v1h-5zM82 129h4v1h-4zM88 129h9v1h-9zM98 129h1v1h-1zM100 129h4v1h-4zM105 129h1v1h-1zM107 129h2v1h-2zM110 129h2v1h-2zM113 129h4v1h-4zM118 129h4v1h-4zM123 129h2v1h-2zM126 129h3v1h-3zM130 129h4v1h-4zM135 129h2v1h-2zM138 129h1v1h-1zM40 130h1v1h-1zM44 130h1v1h-1zM46 130h3v1h-3zM50 130h1v1h-1zM58 130h3v1h-3zM64 130h1v1h-1zM66 130h2v1h-2zM70 130h3v1h-3zM74 130h6v1h-6zM81 130h5v1h-5zM88 130h6v1h-6zM95 130h2v1h-2zM98 130h1v1h-1zM100 130h11v1h-11zM112 130h7v1h-7zM120 130h5v1h-5zM126 130h4v1h-4zM131 130h9v1h-9zM55 131h1v1h-1zM61 131h6v1h-6zM69 131h3v1h-3zM74 131h1v1h-1zM76 131h6v1h-6zM83 131h6v1h-6zM90 131h4v1h-4zM95 131h9v1h-9zM105 131h10v1h-10zM116 131h4v1h-4zM121 131h1v1h-1zM123 131h8v1h-8zM133 131h5v1h-5zM139 131h1v1h-1zM40 132h1v1h-1zM49 132h2v1h-2zM53 132h1v1h-1zM55 132h1v1h-1zM58 132h2v1h-2zM61 132h3v1h-3zM65 132h2v1h-2zM68 132h6v1h-6zM75 132h34v1h-34zM110 132h13v1h-13zM124 132h7v1h-7zM133 132h2v1h-2zM136 132h4v1h-4zM31 133h1v1h-1zM40 133h1v1h-1zM42 133h3v1h-3zM47 133h1v1h-1zM53 133h1v1h-1zM55 133h2v1h-2zM59 133h1v1h-1zM61 133h2v1h-2zM64 133h3v1h-3zM68 133h1v1h-1zM70 133h2v1h-2zM75 133h12v1h-12zM89 133h6v1h-6zM96 133h2v1h-2zM100 133h8v1h-8zM109 133h9v1h-9zM119 133h1v1h-1zM121 133h2v1h-2zM124 133h2v1h-2zM127 133h6v1h-6zM134 133h4v1h-4zM28 134h1v1h-1zM45 134h1v1h-1zM47 134h1v1h-1zM49 134h1v1h-1zM56 134h1v1h-1zM59 134h1v1h-1zM61 134h1v1h-1zM63 134h2v1h-2zM67 134h1v1h-1zM69 134h3v1h-3zM74 134h11v1h-11zM86 134h2v1h-2zM90 134h1v1h-1zM92 134h6v1h-6zM99 134h1v1h-1zM101 134h10v1h-10zM112 134h1v1h-1zM114 134h1v1h-1zM116 134h13v1h-13zM130 134h4v1h-4zM135 134h2v1h-2zM139 134h1v1h-1zM39 135h1v1h-1zM43 135h1v1h-1zM45 135h1v1h-1zM47 135h1v1h-1zM49 135h1v1h-1zM54 135h1v1h-1zM57 135h1v1h-1zM61 135h1v1h-1zM64 135h1v1h-1zM67 135h3v1h-3zM71 135h1v1h-1zM73 135h3v1h-3zM77 135h1v1h-1zM79 135h1v1h-1zM81 135h7v1h-7zM89 135h7v1h-7zM97 135h6v1h-6zM104 135h10v1h-10zM115 135h1v1h-1zM117 135h15v1h-15zM133 135h2v1h-2zM136 135h4v1h-4zM48 136h1v1h-1zM64 136h1v1h-1zM67 136h3v1h-3zM71 136h1v1h-1zM73 136h1v1h-1zM76 136h1v1h-1zM78 136h1v1h-1zM80 136h1v1h-1zM82 136h1v1h-1zM85 136h1v1h-1zM87 136h6v1h-6zM94 136h4v1h-4zM99 136h7v1h-7zM107 136h1v1h-1zM109 136h1v1h-1zM112 136h2v1h-2zM117 136h3v1h-3zM121 136h3v1h-3zM125 136h11v1h-11zM137 136h3v1h-3zM43 137h2v1h-2zM46 137h1v1h-1zM50 137h1v1h-1zM54 137h1v1h-1zM59 137h2v1h-2zM63 137h5v1h-5zM69 137h7v1h-7zM77 137h2v1h-2zM80 137h17v1h-17zM98 137h3v1h-3zM102 137h2v1h-2zM106 137h4v1h-4zM111 137h2v1h-2zM114 137h4v1h-4zM119 137h4v1h-4zM124 137h4v1h-4zM130 137h4v1h-4zM135 137h2v1h-2zM138 137h1v1h-1zM41 138h1v1h-1zM44 138h1v1h-1zM54 138h1v1h-1zM62 138h1v1h-1zM64 138h2v1h-2zM67 138h1v1h-1zM70 138h1v1h-1zM73 138h9v1h-9zM83 138h1v1h-1zM86 138h1v1h-1zM88 138h8v1h-8zM98 138h5v1h-5zM104 138h4v1h-4zM109 138h22v1h-22zM132 138h1v1h-1zM135 138h3v1h-3zM139 138h1v1h-1zM40 139h2v1h-2zM51 139h1v1h-1zM59 139h1v1h-1zM62 139h2v1h-2zM65 139h1v1h-1zM70 139h5v1h-5zM76 139h5v1h-5zM82 139h4v1h-4zM87 139h11v1h-11zM99 139h10v1h-10zM110 139h2v1h-2zM113 139h13v1h-13zM127 139h2v1h-2zM130 139h3v1h-3zM134 139h3v1h-3zM138 139h1v1h-1z"/>
<path fill="#ffff00" d="M37 0h1v1h-1zM7 2h1v1h-1zM11 3h1v1h-1zM15 3h1v1h-1zM11 4h1v1h-1zM15 4h1v1h-1zM19 4h1v1h-1zM11 5h1v1h-1zM12 6h2v1h-2zM15 6h1v1h-1zM19 6h1v1h-1zM25 6h2v1h-2zM2 7h1v1h-1zM9 7h1v1h-1zM17 7h1v1h-1zM28 8h1v1h-1zM7 9h1v1h-1zM16 9h3v1h-3zM20 9h2v1h-2zM23 9h1v1h-1zM26 9h1v1h-1zM14 10h2v1h-2zM18 10h1v1h-1zM21 10h1v1h-1zM28 10h1v1h-1zM31 10h1v1h-1zM3 11h3v1h-3zM14 11h1v1h-1zM17 11h1v1h-1zM26 11h1v1h-1zM45 11h1v1h-1zM52 11h1v1h-1zM6 12h1v1h-1zM22 12h1v1h-1zM38 12h1v1h-1zM6 13h1v1h-1zM22 13h1v1h-1zM25 13h1v1h-1zM37 13h1v1h-1zM40 13h1v1h-1zM59 13h1v1h-1zM10 14h2v1h-2zM27 14h2v1h-2zM30 14h1v1h-1zM36 14h1v1h-1zM38 14h2v1h-2zM54 14h1v1h-1zM3 15h2v1h-2zM6 15h1v1h-1zM10 15h1v1h-1zM17 15h1v1h-1zM20 15h2v1h-2zM31 15h1v1h-1zM37 15h1v1h-1zM9 16h1v1h-1zM17 16h1v1h-1zM31 16h1v1h-1zM37 16h1v1h-1zM41 16h1v1h-1zM7 17h1v1h-1zM9 17h1v1h-1zM11 17h1v1h-1zM15 17h2v1h-2zM36 17h2v1h-2zM9 18h2v1h-2zM24 18h1v1h-1zM27 18h1v1h-1zM4 19h1v1h-1zM6 19h1v1h-1zM26 19h1v1h-1zM28 19h1v1h-1zM31 19h1v1h-1zM36 19h1v1h-1zM9 20h1v1h-1zM15 20h1v1h-1zM21 20h1v1h-1zM25 20h1v1h-1zM30 20h1v1h-1zM39 20h1v1h-1zM53 20h1v1h-1zM57 20h1v1h-1zM9 21h2v1h-2zM15 21h1v1h-1zM20 21h1v1h-1zM23 21h1v1h-1zM30 21h1v1h-1zM39 21h1v1h-1zM42 21h1v1h-1zM45 21h2v1h-2zM49 21h1v1h-1zM54 21h2v1h-2zM12 22h2v1h-2zM26 22h1v1h-1zM35 22h1v1h-1zM41 22h1v1h-1zM49 22h2v1h-2zM60 22h1v1h-1zM9 23h1v1h-1zM21 23h1v1h-1zM34 23h1v1h-1zM44 23h1v1h-1zM47 23h1v1h-1zM53 23h1v1h-1zM70 23h1v1h-1zM18 24h1v1h-1zM31 24h1v1h-1zM36 24h1v1h-1zM38 24h2v1h-2zM41 24h1v1h-1zM46 24h1v1h-1zM50 24h1v1h-1zM55 24h1v1h-1zM64 24h1v1h-1zM6 25h1v1h-1zM13 25h1v1h-1zM20 25h1v1h-1zM28 25h1v1h-1zM39 25h1v1h-1zM43 25h1v1h-1zM50 25h2v1h-2zM6 26h1v1h-1zM9 26h1v1h-1zM11 26h1v1h-1zM19 26h1v1h-1zM22 26h1v1h-1zM29 26h2v1h-2zM35 26h1v1h-1zM43 26h1v1h-1zM51 26h1v1h-1zM57 26h1v1h-1zM90 26h1v1h-1zM14 27h1v1h-1zM18 27h1v1h-1zM28 27h1v1h-1zM35 27h1v1h-1zM39 27h2v1h-2zM46 27h1v1h-1zM49 27h1v1h-1zM51 27h2v1h-2zM57 27h1v1h-1zM8 28h1v1h-1zM10 28h1v1h-1zM14 28h1v1h-1zM19 28h1v1h-1zM25 28h1v1h-1zM27 28h1v1h-1zM52 28h1v1h-1zM58 28h1v1h-1zM63 28h1v1h-1zM65 28h2v1h-2zM75 28h1v1h-1zM118 28h1v1h-1zM132 28h1v1h-1zM26 29h1v1h-1zM34 29h1v1h-1zM37 29h2v1h-2zM40 29h1v1h-1zM43 29h2v1h-2zM49 29h2v1h-2zM53 29h2v1h-2zM58 29h1v1h-1zM60 29h1v1h-1zM67 29h1v1h-1zM70 29h1v1h-1zM93 29h1v1h-1zM104 29h1v1h-1zM122 29h1v1h-1zM134 29h2v1h-2zM14 30h1v1h-1zM20 30h2v1h-2zM26 30h1v1h-1zM31 30h1v1h-1zM39 30h2v1h-2zM43 30h1v1h-1zM46 30h1v1h-1zM51 30h1v1h-1zM58 30h1v1h-1zM60 30h2v1h-2zM66 30h1v1h-1zM78 30h1v1h-1zM87 30h1v1h-1zM91 30h1v1h-1zM102 30h1v1h-1zM10 31h1v1h-1zM15 31h2v1h-2zM19 31h1v1h-1zM24 31h1v1h-1zM30 31h1v1h-1zM33 31h1v1h-1zM39 31h1v1h-1zM47 31h2v1h-2zM50 31h1v1h-1zM57 31h1v1h-1zM60 31h1v1h-1zM69 31h1v1h-1zM85 31h2v1h-2zM89 31h1v1h-1zM100 31h1v1h-1zM130 31h1v1h-1zM33 32h1v1h-1zM41 32h1v1h-1zM45 32h1v1h-1zM52 32h1v1h-1zM58 32h1v1h-1zM64 32h1v1h-1zM67 32h1v1h-1zM82 32h1v1h-1zM106 32h1v1h-1zM31 33h2v1h-2zM38 33h1v1h-1zM47 33h1v1h-1zM52 33h1v1h-1zM54 33h1v1h-1zM56 33h2v1h-2zM64 33h1v1h-1zM67 33h1v1h-1zM109 33h1v1h-1zM117 33h1v1h-1zM23 34h1v1h-1zM29 34h1v1h-1zM44 34h1v1h-1zM48 34h1v1h-1zM55 34h1v1h-1zM68 34h3v1h-3zM95 34h1v1h-1zM114 34h1v1h-1zM119 34h1v1h-1zM22 35h1v1h-1zM26 35h2v1h-2zM37 35h1v1h-1zM49 35h1v1h-1zM53 35h1v1h-1zM59 35h1v1h-1zM61 35h1v1h-1zM66 35h1v1h-1zM69 35h1v1h-1zM91 35h2v1h-2zM14 36h1v1h-1zM17 36h1v1h-1zM19 36h1v1h-1zM24 36h1v1h-1zM52 36h1v1h-1zM55 36h1v1h-1zM68 36h1v1h-1zM79 36h1v1h-1zM82 36h1v1h-1zM85 36h1v1h-1zM90 36h2v1h-2zM94 36h1v1h-1zM108 36h1v1h-1zM110 36h1v1h-1zM114 36h1v1h-1zM117 36h1v1h-1zM122 36h1v1h-1zM125 36h1v1h-1zM134 36h2v1h-2zM0 37h1v1h-1zM13 37h1v1h-1zM15 37h3v1h-3zM29 37h1v1h-1zM35 37h1v1h-1zM38 37h1v1h-1zM66 37h1v1h-1zM71 37h1v1h-1zM73 37h1v1h-1zM83 37h2v1h-2zM90 37h1v1h-1zM116 37h1v1h-1zM12 38h1v1h-1zM14 38h1v1h-1zM24 38h1v1h-1zM29 38h1v1h-1zM33 38h1v1h-1zM37 38h1v1h-1zM40 38h5v1h-5zM57 38h1v1h-1zM76 38h1v1h-1zM84 38h1v1h-1zM89 38h1v1h-1zM92 38h1v1h-1zM94 38h1v1h-1zM114 38h1v1h-1zM119 38h1v1h-1zM138 38h1v1h-1zM14 39h1v1h-1zM20 39h2v1h-2zM24 39h2v1h-2zM27 39h1v1h-1zM30 39h2v1h-2zM45 39h2v1h-2zM48 39h1v1h-1zM50 39h1v1h-1zM53 39h1v1h-1zM56 39h1v1h-1zM59 39h1v1h-1zM61 39h1v1h-1zM68 39h1v1h-1zM70 39h1v1h-1zM88 39h1v1h-1zM106 39h1v1h-1zM13 40h1v1h-1zM27 40h1v1h-1zM29 40h2v1h-2zM38 40h1v1h-1zM45 40h1v1h-1zM58 40h1v1h-1zM69 40h1v1h-1zM77 40h1v1h-1zM79 40h1v1h-1zM82 40h1v1h-1zM108 40h1v1h-1zM113 40h1v1h-1zM122 40h1v1h-1zM131 40h1v1h-1zM134 40h2v1h-2zM16 41h1v1h-1zM22 41h1v1h-1zM24 41h1v1h-1zM32 41h1v1h-1zM38 41h1v1h-1zM43 41h2v1h-2zM49 41h3v1h-3zM54 41h1v1h-1zM63 41h1v1h-1zM69 41h1v1h-1zM73 41h1v1h-1zM76 41h2v1h-2zM87 41h1v1h-1zM89 41h2v1h-2zM96 41h2v1h-2zM100 41h1v1h-1zM103 41h1v1h-1zM107 41h1v1h-1zM111 41h1v1h-1zM114 41h1v1h-1zM117 41h2v1h-2zM130 41h1v1h-1zM135 41h1v1h-1zM137 41h1v1h-1zM21 42h1v1h-1zM38 42h1v1h-1zM44 42h1v1h-1zM47 42h1v1h-1zM58 42h1v1h-1zM69 42h1v1h-1zM80 42h1v1h-1zM87 42h1v1h-1zM93 42h1v1h-1zM98 42h2v1h-2zM113 42h1v1h-1zM119 42h1v1h-1zM123 42h1v1h-1zM125 42h1v1h-1zM130 42h1v1h-1zM25 43h2v1h-2zM29 43h2v1h-2zM38 43h1v1h-1zM41 43h1v1h-1zM57 43h1v1h-1zM66 43h1v1h-1zM74 43h2v1h-2zM77 43h1v1h-1zM85 43h1v1h-1zM91 43h1v1h-1zM123 43h1v1h-1zM130 43h1v1h-1zM136 43h1v1h-1zM138 43h1v1h-1zM23 44h1v1h-1zM29 44h1v1h-1zM34 44h1v1h-1zM38 44h1v1h-1zM41 44h2v1h-2zM46 44h1v1h-1zM58 44h1v1h-1zM78 44h1v1h-1zM96 44h1v1h-1zM103 44h1v1h-1zM105 44h1v1h-1zM107 44h1v1h-1zM114 44h1v1h-1zM117 44h1v1h-1zM120 44h2v1h-2zM128 44h1v1h-1zM131 44h1v1h-1zM11 45h1v1h-1zM21 45h1v1h-1zM32 45h1v1h-1zM39 45h2v1h-2zM53 45h1v1h-1zM59 45h1v1h-1zM62 45h1v1h-1zM68 45h1v1h-1zM77 45h1v1h-1zM93 45h1v1h-1zM95 45h1v1h-1zM98 45h1v1h-1zM110 45h1v1h-1zM112 45h1v1h-1zM116 45h1v1h-1zM125 45h1v1h-1zM138 45h2v1h-2zM21 46h1v1h-1zM24 46h1v1h-1zM27 46h1v1h-1zM30 46h1v1h-1zM39 46h1v1h-1zM44 46h1v1h-1zM55 46h1v1h-1zM62 46h1v1h-1zM66 46h1v1h-1zM72 46h1v1h-1zM78 46h2v1h-2zM81 46h1v1h-1zM90 46h1v1h-1zM97 46h1v1h-1zM99 46h2v1h-2zM105 46h1v1h-1zM110 46h1v1h-1zM112 46h1v1h-1zM116 46h1v1h-1zM122 46h2v1h-2zM139 46h1v1h-1zM23 47h1v1h-1zM31 47h1v1h-1zM33 47h1v1h-1zM42 47h1v1h-1zM52 47h1v1h-1zM69 47h1v1h-1zM76 47h1v1h-1zM79 47h1v1h-1zM86 47h2v1h-2zM100 47h1v1h-1zM120 47h1v1h-1zM129 47h1v1h-1zM136 47h1v1h-1zM138 47h1v1h-1zM31 48h1v1h-1zM34 48h1v1h-1zM39 48h1v1h-1zM52 48h1v1h-1zM60 48h1v1h-1zM64 48h1v1h-1zM72 48h1v1h-1zM80 48h1v1h-1zM85 48h1v1h-1zM87 48h1v1h-1zM96 48h1v1h-1zM98 48h1v1h-1zM113 48h1v1h-1zM119 48h2v1h-2zM137 48h1v1h-1zM21 49h2v1h-2zM27 49h1v1h-1zM29 49h1v1h-1zM35 49h1v1h-1zM41 49h1v1h-1zM51 49h1v1h-1zM53 49h1v1h-1zM57 49h2v1h-2zM63 49h1v1h-1zM70 49h1v1h-1zM81 49h1v1h-1zM83 49h1v1h-1zM91 49h1v1h-1zM101 49h1v1h-1zM109 49h2v1h-2zM119 49h1v1h-1zM122 49h1v1h-1zM129 49h1v1h-1zM139 49h1v1h-1zM22 50h1v1h-1zM24 50h2v1h-2zM29 50h1v1h-1zM31 50h1v1h-1zM39 50h1v1h-1zM41 50h1v1h-1zM71 50h1v1h-1zM80 50h1v1h-1zM86 50h1v1h-1zM100 50h1v1h-1zM106 50h1v1h-1zM110 50h2v1h-2zM117 50h1v1h-1zM121 50h1v1h-1zM135 50h1v1h-1zM138 50h2v1h-2zM25 51h3v1h-3zM30 51h1v1h-1zM41 51h1v1h-1zM49 51h1v1h-1zM68 51h1v1h-1zM74 51h1v1h-1zM93 51h1v1h-1zM97 51h1v1h-1zM105 51h1v1h-1zM113 51h1v1h-1zM115 51h1v1h-1zM127 51h1v1h-1zM130 51h1v1h-1zM133 51h1v1h-1zM11 52h1v1h-1zM27 52h2v1h-2zM32 52h2v1h-2zM36 52h1v1h-1zM47 52h2v1h-2zM56 52h1v1h-1zM60 52h1v1h-1zM64 52h1v1h-1zM72 52h1v1h-1zM81 52h1v1h-1zM83 52h1v1h-1zM92 52h2v1h-2zM100 52h3v1h-3zM105 52h1v1h-1zM115 52h3v1h-3zM119 52h1v1h-1zM127 52h2v1h-2zM131 52h1v1h-1zM134 52h1v1h-1zM139 52h1v1h-1zM20 53h1v1h-1zM23 53h1v1h-1zM29 53h1v1h-1zM35 53h1v1h-1zM39 53h1v1h-1zM45 53h1v1h-1zM49 53h1v1h-1zM63 53h1v1h-1zM65 53h1v1h-1zM81 53h1v1h-1zM97 53h1v1h-1zM99 53h2v1h-2zM105 53h1v1h-1zM109 53h1v1h-1zM117 53h1v1h-1zM121 53h1v1h-1zM124 53h1v1h-1zM134 53h1v1h-1zM139 53h1v1h-1zM14 54h1v1h-1zM21 54h1v1h-1zM29 54h1v1h-1zM33 54h1v1h-1zM41 54h1v1h-1zM59 54h1v1h-1zM70 54h2v1h-2zM77 54h2v1h-2zM83 54h2v1h-2zM89 54h1v1h-1zM94 54h1v1h-1zM101 54h2v1h-2zM115 54h1v1h-1zM128 54h1v1h-1zM131 54h1v1h-1zM133 54h1v1h-1zM136 54h1v1h-1zM139 54h1v1h-1zM21 55h1v1h-1zM24 55h1v1h-1zM34 55h1v1h-1zM36 55h1v1h-1zM46 55h1v1h-1zM72 55h1v1h-1zM86 55h1v1h-1zM92 55h1v1h-1zM97 55h1v1h-1zM101 55h1v1h-1zM103 55h1v1h-1zM105 55h1v1h-1zM108 55h2v1h-2zM113 55h1v1h-1zM115 55h1v1h-1zM124 55h1v1h-1zM127 55h1v1h-1zM129 55h1v1h-1zM33 56h1v1h-1zM39 56h1v1h-1zM52 56h1v1h-1zM57 56h1v1h-1zM66 56h1v1h-1zM68 56h1v1h-1zM71 56h2v1h-2zM81 56h2v1h-2zM87 56h1v1h-1zM97 56h1v1h-1zM99 56h2v1h-2zM109 56h1v1h-1zM111 56h1v1h-1zM120 56h1v1h-1zM126 56h1v1h-1zM128 56h1v1h-1zM132 56h1v1h-1zM136 56h1v1h-1zM139 56h1v1h-1zM20 57h1v1h-1zM26 57h2v1h-2zM31 57h1v1h-1zM33 57h1v1h-1zM38 57h1v1h-1zM43 57h1v1h-1zM49 57h1v1h-1zM56 57h1v1h-1zM59 57h1v1h-1zM66 57h1v1h-1zM68 57h1v1h-1zM72 57h1v1h-1zM87 57h1v1h-1zM95 57h1v1h-1zM101 57h1v1h-1zM106 57h1v1h-1zM110 57h1v1h-1zM114 57h1v1h-1zM117 57h1v1h-1zM121 57h4v1h-4zM128 57h1v1h-1zM28 58h3v1h-3zM32 58h1v1h-1zM40 58h1v1h-1zM42 58h1v1h-1zM44 58h1v1h-1zM49 58h1v1h-1zM71 58h1v1h-1zM74 58h1v1h-1zM87 58h1v1h-1zM90 58h2v1h-2zM96 58h2v1h-2zM115 58h1v1h-1zM131 58h1v1h-1zM133 58h1v1h-1zM135 58h1v1h-1zM137 58h2v1h-2zM13 59h1v1h-1zM35 59h1v1h-1zM39 59h1v1h-1zM45 59h1v1h-1zM54 59h1v1h-1zM57 59h1v1h-1zM64 59h1v1h-1zM92 59h1v1h-1zM97 59h1v1h-1zM108 59h3v1h-3zM113 59h1v1h-1zM122 59h1v1h-1zM136 59h1v1h-1zM138 59h1v1h-1zM22 60h1v1h-1zM29 60h3v1h-3zM48 60h1v1h-1zM52 60h1v1h-1zM67 60h1v1h-1zM75 60h1v1h-1zM81 60h1v1h-1zM100 60h1v1h-1zM104 60h1v1h-1zM109 60h1v1h-1zM111 60h1v1h-1zM116 60h1v1h-1zM120 60h2v1h-2zM133 60h1v1h-1zM139 60h1v1h-1zM30 61h1v1h-1zM35 61h1v1h-1zM39 61h1v1h-1zM75 61h1v1h-1zM83 61h1v1h-1zM109 61h1v1h-1zM111 61h2v1h-2zM117 61h1v1h-1zM121 61h1v1h-1zM129 61h1v1h-1zM136 61h1v1h-1zM139 61h1v1h-1zM45 62h2v1h-2zM63 62h1v1h-1zM70 62h1v1h-1zM76 62h2v1h-2zM90 62h2v1h-2zM96 62h1v1h-1zM103 62h1v1h-1zM110 62h1v1h-1zM114 62h2v1h-2zM118 62h2v1h-2zM134 62h2v1h-2zM28 63h1v1h-1zM41 63h1v1h-1zM49 63h1v1h-1zM53 63h1v1h-1zM62 63h1v1h-1zM80 63h1v1h-1zM106 63h1v1h-1zM110 63h1v1h-1zM112 63h1v1h-1zM122 63h2v1h-2zM125 63h2v1h-2zM133 63h1v1h-1zM135 63h1v1h-1zM24 64h1v1h-1zM32 64h2v1h-2zM48 64h1v1h-1zM52 64h1v1h-1zM59 64h1v1h-1zM80 64h1v1h-1zM83 64h1v1h-1zM103 64h1v1h-1zM105 64h1v1h-1zM122 64h2v1h-2zM139 64h1v1h-1zM28 65h1v1h-1zM53 65h1v1h-1zM68 65h1v1h-1zM80 65h1v1h-1zM87 65h1v1h-1zM92 65h1v1h-1zM118 65h1v1h-1zM128 65h1v1h-1zM136 65h1v1h-1zM28 66h1v1h-1zM30 66h1v1h-1zM35 66h1v1h-1zM37 66h1v1h-1zM43 66h1v1h-1zM46 66h1v1h-1zM56 66h2v1h-2zM91 66h1v1h-1zM104 66h2v1h-2zM120 66h1v1h-1zM123 66h1v1h-1zM134 66h3v1h-3zM139 66h1v1h-1zM29 67h1v1h-1zM32 67h2v1h-2zM60 67h1v1h-1zM82 67h1v1h-1zM86 67h1v1h-1zM109 67h1v1h-1zM116 67h1v1h-1zM119 67h1v1h-1zM125 67h1v1h-1zM128 67h1v1h-1zM133 67h1v1h-1zM34 68h1v1h-1zM36 68h1v1h-1zM39 68h1v1h-1zM45 68h1v1h-1zM51 68h1v1h-1zM56 68h2v1h-2zM65 68h1v1h-1zM73 68h1v1h-1zM93 68h1v1h-1zM105 68h1v1h-1zM108 68h1v1h-1zM110 68h1v1h-1zM134 68h1v1h-1zM137 68h1v1h-1zM139 68h1v1h-1zM31 69h1v1h-1zM34 69h2v1h-2zM40 69h3v1h-3zM47 69h1v1h-1zM74 69h1v1h-1zM85 69h1v1h-1zM90 69h1v1h-1zM103 69h1v1h-1zM110 69h1v1h-1zM23 70h1v1h-1zM29 70h1v1h-1zM34 70h1v1h-1zM39 70h1v1h-1zM49 70h1v1h-1zM54 70h1v1h-1zM62 70h1v1h-1zM105 70h1v1h-1zM120 70h1v1h-1zM126 70h1v1h-1zM135 70h2v1h-2zM37 71h1v1h-1zM50 71h1v1h-1zM54 71h1v1h-1zM56 71h1v1h-1zM58 71h1v1h-1zM90 71h1v1h-1zM101 71h1v1h-1zM108 71h1v1h-1zM113 71h1v1h-1zM118 71h1v1h-1zM123 71h1v1h-1zM125 71h1v1h-1zM138 71h1v1h-1zM46 72h1v1h-1zM48 72h1v1h-1zM52 72h1v1h-1zM55 72h3v1h-3zM83 72h1v1h-1zM88 72h1v1h-1zM90 72h1v1h-1zM95 72h1v1h-1zM99 72h1v1h-1zM107 72h1v1h-1zM115 72h1v1h-1zM131 72h1v1h-1zM133 72h2v1h-2zM136 72h1v1h-1zM138 72h1v1h-1zM37 73h1v1h-1zM41 73h1v1h-1zM68 73h1v1h-1zM81 73h1v1h-1zM83 73h1v1h-1zM98 73h1v1h-1zM100 73h1v1h-1zM102 73h1v1h-1zM105 73h1v1h-1zM108 73h1v1h-1zM111 73h1v1h-1zM125 73h1v1h-1zM130 73h2v1h-2zM133 73h1v1h-1zM43 74h1v1h-1zM51 74h1v1h-1zM58 74h1v1h-1zM69 74h1v1h-1zM89 74h1v1h-1zM98 74h1v1h-1zM103 74h1v1h-1zM112 74h1v1h-1zM123 74h2v1h-2zM28 75h1v1h-1zM43 75h1v1h-1zM60 75h2v1h-2zM79 75h1v1h-1zM93 75h1v1h-1zM97 75h1v1h-1zM104 75h1v1h-1zM107 75h1v1h-1zM116 75h1v1h-1zM119 75h1v1h-1zM123 75h1v1h-1zM131 75h1v1h-1zM136 75h1v1h-1zM139 75h1v1h-1zM38 76h1v1h-1zM41 76h1v1h-1zM47 76h1v1h-1zM62 76h1v1h-1zM77 76h1v1h-1zM85 76h1v1h-1zM112 76h1v1h-1zM120 76h1v1h-1zM123 76h1v1h-1zM135 76h1v1h-1zM40 77h2v1h-2zM43 77h1v1h-1zM45 77h1v1h-1zM54 77h1v1h-1zM62 77h1v1h-1zM76 77h1v1h-1zM81 77h1v1h-1zM84 77h2v1h-2zM107 77h1v1h-1zM117 77h1v1h-1zM136 77h1v1h-1zM30 78h1v1h-1zM44 78h1v1h-1zM46 78h1v1h-1zM54 78h1v1h-1zM79 78h1v1h-1zM97 78h1v1h-1zM104 78h1v1h-1zM109 78h1v1h-1zM113 78h1v1h-1zM36 79h1v1h-1zM40 79h1v1h-1zM46 79h2v1h-2zM75 79h1v1h-1zM78 79h1v1h-1zM92 79h2v1h-2zM100 79h1v1h-1zM109 79h1v1h-1zM120 79h2v1h-2zM137 79h1v1h-1zM42 80h1v1h-1zM48 80h1v1h-1zM50 80h1v1h-1zM63 80h3v1h-3zM84 80h1v1h-1zM88 80h1v1h-1zM99 80h1v1h-1zM111 80h1v1h-1zM123 80h1v1h-1zM130 80h1v1h-1zM46 81h1v1h-1zM49 81h1v1h-1zM52 81h2v1h-2zM56 81h1v1h-1zM60 81h1v1h-1zM73 81h1v1h-1zM77 81h1v1h-1zM88 81h1v1h-1zM102 81h2v1h-2zM105 81h1v1h-1zM108 81h1v1h-1zM119 81h1v1h-1zM121 81h1v1h-1zM129 81h1v1h-1zM136 81h1v1h-1zM32 82h1v1h-1zM36 82h1v1h-1zM40 82h1v1h-1zM56 82h1v1h-1zM67 82h1v1h-1zM89 82h1v1h-1zM114 82h1v1h-1zM119 82h2v1h-2zM125 82h1v1h-1zM127 82h1v1h-1zM131 82h1v1h-1zM138 82h1v1h-1zM37 83h1v1h-1zM49 83h1v1h-1zM52 83h1v1h-1zM54 83h1v1h-1zM61 83h1v1h-1zM64 83h1v1h-1zM72 83h2v1h-2zM93 83h1v1h-1zM98 83h1v1h-1zM112 83h1v1h-1zM123 83h1v1h-1zM125 83h1v1h-1zM37 84h2v1h-2zM54 84h1v1h-1zM77 84h1v1h-1zM80 84h1v1h-1zM98 84h1v1h-1zM118 84h2v1h-2zM121 84h1v1h-1zM136 84h1v1h-1zM31 85h1v1h-1zM36 85h1v1h-1zM43 85h1v1h-1zM48 85h1v1h-1zM69 85h1v1h-1zM76 85h2v1h-2zM86 85h1v1h-1zM138 85h1v1h-1zM31 86h1v1h-1zM47 86h1v1h-1zM50 86h1v1h-1zM55 86h1v1h-1zM67 86h1v1h-1zM85 86h1v1h-1zM111 86h1v1h-1zM121 86h1v1h-1zM130 86h1v1h-1zM136 86h1v1h-1zM139 86h1v1h-1zM30 87h1v1h-1zM41 87h2v1h-2zM47 87h2v1h-2zM56 87h3v1h-3zM65 87h1v1h-1zM88 87h1v1h-1zM93 87h1v1h-1zM99 87h1v1h-1zM106 87h2v1h-2zM133 87h1v1h-1zM138 87h1v1h-1zM39 88h1v1h-1zM72 88h1v1h-1zM80 88h2v1h-2zM87 88h1v1h-1zM92 88h1v1h-1zM98 88h1v1h-1zM104 88h1v1h-1zM111 88h1v1h-1zM117 88h2v1h-2zM125 88h4v1h-4zM134 88h2v1h-2zM31 89h1v1h-1zM38 89h1v1h-1zM41 89h1v1h-1zM54 89h1v1h-1zM74 89h1v1h-1zM82 89h1v1h-1zM93 89h1v1h-1zM125 89h1v1h-1zM131 89h1v1h-1zM134 89h1v1h-1zM26 90h1v1h-1zM36 90h2v1h-2zM41 90h1v1h-1zM46 90h1v1h-1zM58 90h1v1h-1zM62 90h1v1h-1zM69 90h1v1h-1zM71 90h2v1h-2zM94 90h2v1h-2zM102 90h1v1h-1zM112 90h1v1h-1zM118 90h2v1h-2zM30 91h1v1h-1zM35 91h2v1h-2zM43 91h1v1h-1zM49 91h1v1h-1zM58 91h1v1h-1zM62 91h1v1h-1zM66 91h1v1h-1zM99 91h1v1h-1zM106 91h1v1h-1zM110 91h1v1h-1zM118 91h1v1h-1zM128 91h1v1h-1zM134 91h1v1h-1zM35 92h1v1h-1zM38 92h1v1h-1zM52 92h1v1h-1zM55 92h1v1h-1zM59 92h1v1h-1zM65 92h1v1h-1zM79 92h1v1h-1zM88 92h1v1h-1zM97 92h1v1h-1zM116 92h1v1h-1zM29 93h1v1h-1zM42 93h1v1h-1zM45 93h1v1h-1zM51 93h2v1h-2zM68 93h1v1h-1zM75 93h1v1h-1zM79 93h1v1h-1zM83 93h1v1h-1zM87 93h1v1h-1zM89 93h1v1h-1zM96 93h1v1h-1zM124 93h1v1h-1zM128 93h1v1h-1zM36 94h1v1h-1zM38 94h1v1h-1zM54 94h1v1h-1zM90 94h1v1h-1zM108 94h1v1h-1zM130 94h1v1h-1zM34 95h1v1h-1zM45 95h1v1h-1zM57 95h1v1h-1zM72 95h1v1h-1zM90 95h1v1h-1zM110 95h1v1h-1zM124 95h1v1h-1zM127 95h2v1h-2zM41 96h1v1h-1zM44 96h1v1h-1zM48 96h1v1h-1zM58 96h1v1h-1zM62 96h1v1h-1zM93 96h1v1h-1zM135 96h1v1h-1zM138 96h1v1h-1zM41 97h1v1h-1zM46 97h1v1h-1zM51 97h1v1h-1zM53 97h1v1h-1zM55 97h2v1h-2zM58 97h2v1h-2zM75 97h1v1h-1zM78 97h1v1h-1zM92 97h1v1h-1zM99 97h1v1h-1zM115 97h1v1h-1zM130 97h1v1h-1zM137 97h1v1h-1zM42 98h1v1h-1zM45 98h1v1h-1zM48 98h1v1h-1zM73 98h2v1h-2zM83 98h2v1h-2zM88 98h1v1h-1zM108 98h1v1h-1zM121 98h1v1h-1zM133 98h2v1h-2zM42 99h1v1h-1zM46 99h1v1h-1zM53 99h1v1h-1zM56 99h1v1h-1zM72 99h1v1h-1zM80 99h1v1h-1zM87 99h1v1h-1zM91 99h1v1h-1zM97 99h1v1h-1zM118 99h2v1h-2zM127 99h1v1h-1zM129 99h2v1h-2zM133 99h1v1h-1zM31 100h1v1h-1zM41 100h1v1h-1zM46 100h2v1h-2zM50 100h1v1h-1zM52 100h2v1h-2zM56 100h1v1h-1zM60 100h1v1h-1zM73 100h1v1h-1zM79 100h1v1h-1zM104 100h1v1h-1zM122 100h2v1h-2zM128 100h1v1h-1zM49 101h1v1h-1zM52 101h1v1h-1zM54 101h2v1h-2zM57 101h1v1h-1zM71 101h1v1h-1zM116 101h1v1h-1zM122 101h1v1h-1zM124 101h1v1h-1zM30 102h1v1h-1zM52 102h1v1h-1zM54 102h1v1h-1zM73 102h1v1h-1zM81 102h1v1h-1zM90 102h1v1h-1zM103 102h1v1h-1zM125 102h1v1h-1zM41 103h1v1h-1zM44 103h1v1h-1zM55 103h1v1h-1zM62 103h1v1h-1zM64 103h1v1h-1zM69 103h1v1h-1zM74 103h1v1h-1zM81 103h1v1h-1zM102 103h1v1h-1zM108 103h1v1h-1zM29 104h1v1h-1zM60 104h1v1h-1zM66 104h1v1h-1zM75 104h1v1h-1zM78 104h1v1h-1zM88 104h1v1h-1zM100 104h1v1h-1zM109 104h1v1h-1zM121 104h1v1h-1zM126 104h1v1h-1zM131 104h1v1h-1zM137 104h1v1h-1zM44 105h1v1h-1zM46 105h1v1h-1zM51 105h3v1h-3zM55 105h1v1h-1zM64 105h1v1h-1zM66 105h1v1h-1zM68 105h1v1h-1zM70 105h1v1h-1zM73 105h1v1h-1zM81 105h1v1h-1zM110 105h1v1h-1zM117 105h1v1h-1zM120 105h1v1h-1zM137 105h1v1h-1zM32 106h1v1h-1zM39 106h1v1h-1zM50 106h1v1h-1zM57 106h1v1h-1zM63 106h1v1h-1zM87 106h1v1h-1zM91 106h1v1h-1zM129 106h1v1h-1zM136 106h1v1h-1zM41 107h1v1h-1zM44 107h1v1h-1zM72 107h1v1h-1zM75 107h1v1h-1zM77 107h1v1h-1zM87 107h1v1h-1zM119 107h1v1h-1zM122 107h1v1h-1zM36 108h1v1h-1zM40 108h1v1h-1zM55 108h1v1h-1zM59 108h1v1h-1zM68 108h1v1h-1zM71 108h1v1h-1zM73 108h1v1h-1zM81 108h1v1h-1zM94 108h1v1h-1zM98 108h1v1h-1zM103 108h1v1h-1zM127 108h1v1h-1zM133 108h1v1h-1zM138 108h1v1h-1zM33 109h1v1h-1zM49 109h1v1h-1zM53 109h1v1h-1zM55 109h2v1h-2zM59 109h3v1h-3zM67 109h1v1h-1zM78 109h2v1h-2zM104 109h1v1h-1zM121 109h1v1h-1zM132 109h1v1h-1zM36 110h1v1h-1zM45 110h2v1h-2zM49 110h2v1h-2zM57 110h1v1h-1zM59 110h1v1h-1zM62 110h2v1h-2zM68 110h2v1h-2zM91 110h1v1h-1zM95 110h1v1h-1zM105 110h1v1h-1zM127 110h1v1h-1zM136 110h2v1h-2zM41 111h1v1h-1zM50 111h1v1h-1zM56 111h1v1h-1zM60 111h2v1h-2zM73 111h1v1h-1zM80 111h1v1h-1zM86 111h1v1h-1zM88 111h1v1h-1zM116 111h1v1h-1zM134 111h1v1h-1zM136 111h1v1h-1zM45 112h2v1h-2zM61 112h1v1h-1zM63 112h1v1h-1zM74 112h1v1h-1zM76 112h1v1h-1zM83 112h1v1h-1zM90 112h1v1h-1zM125 112h1v1h-1zM128 112h2v1h-2zM139 112h1v1h-1zM40 113h1v1h-1zM42 113h1v1h-1zM48 113h1v1h-1zM51 113h1v1h-1zM55 113h1v1h-1zM59 113h1v1h-1zM71 113h1v1h-1zM78 113h1v1h-1zM34 114h1v1h-1zM36 114h1v1h-1zM38 114h1v1h-1zM41 114h1v1h-1zM44 114h1v1h-1zM57 114h1v1h-1zM62 114h1v1h-1zM82 114h1v1h-1zM121 114h1v1h-1zM135 114h1v1h-1zM51 115h2v1h-2zM54 115h2v1h-2zM58 115h1v1h-1zM62 115h1v1h-1zM72 115h1v1h-1zM97 115h1v1h-1zM131 115h1v1h-1zM37 116h1v1h-1zM45 116h2v1h-2zM52 116h1v1h-1zM60 116h1v1h-1zM67 116h1v1h-1zM75 116h1v1h-1zM92 116h1v1h-1zM101 116h1v1h-1zM111 116h1v1h-1zM123 116h1v1h-1zM135 116h2v1h-2zM33 117h1v1h-1zM36 117h1v1h-1zM41 117h1v1h-1zM44 117h1v1h-1zM50 117h1v1h-1zM52 117h2v1h-2zM57 117h1v1h-1zM61 117h1v1h-1zM77 117h1v1h-1zM88 117h1v1h-1zM105 117h1v1h-1zM125 117h2v1h-2zM128 117h1v1h-1zM28 118h1v1h-1zM41 118h1v1h-1zM62 118h1v1h-1zM65 118h1v1h-1zM71 118h1v1h-1zM84 118h1v1h-1zM88 118h1v1h-1zM90 118h2v1h-2zM99 118h1v1h-1zM120 118h1v1h-1zM124 118h1v1h-1zM127 118h1v1h-1zM133 118h1v1h-1zM137 118h1v1h-1zM34 119h1v1h-1zM38 119h1v1h-1zM42 119h1v1h-1zM48 119h2v1h-2zM52 119h1v1h-1zM62 119h1v1h-1zM67 119h1v1h-1zM75 119h1v1h-1zM81 119h2v1h-2zM84 119h1v1h-1zM90 119h1v1h-1zM99 119h1v1h-1zM107 119h1v1h-1zM121 119h1v1h-1zM130 119h1v1h-1zM44 120h1v1h-1zM47 120h2v1h-2zM56 120h1v1h-1zM60 120h1v1h-1zM66 120h1v1h-1zM70 120h1v1h-1zM76 120h1v1h-1zM79 120h1v1h-1zM82 120h1v1h-1zM105 120h1v1h-1zM118 120h1v1h-1zM133 120h1v1h-1zM136 120h1v1h-1zM44 121h1v1h-1zM50 121h1v1h-1zM53 121h1v1h-1zM57 121h1v1h-1zM60 121h2v1h-2zM79 121h1v1h-1zM81 121h1v1h-1zM84 121h1v1h-1zM86 121h1v1h-1zM98 121h1v1h-1zM104 121h1v1h-1zM109 121h1v1h-1zM114 121h1v1h-1zM119 121h1v1h-1zM127 121h1v1h-1zM29 122h1v1h-1zM36 122h1v1h-1zM40 122h1v1h-1zM46 122h1v1h-1zM49 122h1v1h-1zM57 122h1v1h-1zM59 122h1v1h-1zM63 122h2v1h-2zM100 122h2v1h-2zM107 122h1v1h-1zM129 122h1v1h-1zM131 122h1v1h-1zM42 123h2v1h-2zM46 123h1v1h-1zM57 123h1v1h-1zM63 123h2v1h-2zM66 123h1v1h-1zM71 123h1v1h-1zM74 123h3v1h-3zM80 123h1v1h-1zM83 123h1v1h-1zM100 123h1v1h-1zM116 123h1v1h-1zM127 123h1v1h-1zM132 123h2v1h-2zM137 123h1v1h-1zM53 124h1v1h-1zM55 124h1v1h-1zM57 124h1v1h-1zM74 124h1v1h-1zM93 124h1v1h-1zM95 124h1v1h-1zM101 124h1v1h-1zM118 124h1v1h-1zM36 125h1v1h-1zM42 125h1v1h-1zM45 125h1v1h-1zM63 125h1v1h-1zM67 125h1v1h-1zM71 125h1v1h-1zM73 125h1v1h-1zM82 125h2v1h-2zM88 125h2v1h-2zM102 125h1v1h-1zM112 125h1v1h-1zM117 125h1v1h-1zM56 126h1v1h-1zM63 126h1v1h-1zM70 126h1v1h-1zM88 126h1v1h-1zM104 126h1v1h-1zM117 126h1v1h-1zM133 126h1v1h-1zM139 126h1v1h-1zM51 127h2v1h-2zM55 127h1v1h-1zM82 127h1v1h-1zM88 127h1v1h-1zM95 127h1v1h-1zM99 127h1v1h-1zM108 127h1v1h-1zM110 127h1v1h-1zM118 127h1v1h-1zM121 127h1v1h-1zM123 127h1v1h-1zM44 128h1v1h-1zM52 128h1v1h-1zM54 128h1v1h-1zM56 128h2v1h-2zM65 128h1v1h-1zM67 128h1v1h-1zM88 128h1v1h-1zM91 128h1v1h-1zM93 128h1v1h-1zM95 128h1v1h-1zM100 128h1v1h-1zM112 128h1v1h-1zM117 128h1v1h-1zM137 128h1v1h-1zM47 129h1v1h-1zM49 129h1v1h-1zM55 129h1v1h-1zM61 129h1v1h-1zM81 129h1v1h-1zM99 129h1v1h-1zM106 129h1v1h-1zM112 129h1v1h-1zM122 129h1v1h-1zM134 129h1v1h-1zM31 130h1v1h-1zM41 130h3v1h-3zM51 130h1v1h-1zM73 130h1v1h-1zM80 130h1v1h-1zM86 130h1v1h-1zM94 130h1v1h-1zM97 130h1v1h-1zM99 130h1v1h-1zM119 130h1v1h-1zM40 131h1v1h-1zM44 131h1v1h-1zM52 131h1v1h-1zM54 131h1v1h-1zM58 131h1v1h-1zM72 131h2v1h-2zM75 131h1v1h-1zM82 131h1v1h-1zM89 131h1v1h-1zM104 131h1v1h-1zM115 131h1v1h-1zM122 131h1v1h-1zM132 131h1v1h-1zM28 132h1v1h-1zM56 132h1v1h-1zM109 132h1v1h-1zM123 132h1v1h-1zM131 132h1v1h-1zM135 132h1v1h-1zM51 133h1v1h-1zM54 133h1v1h-1zM58 133h1v1h-1zM60 133h1v1h-1zM63 133h1v1h-1zM67 133h1v1h-1zM72 133h2v1h-2zM87 133h1v1h-1zM98 133h2v1h-2zM108 133h1v1h-1zM118 133h1v1h-1zM120 133h1v1h-1zM123 133h1v1h-1zM126 133h1v1h-1zM138 133h2v1h-2zM29 134h1v1h-1zM36 134h1v1h-1zM40 134h1v1h-1zM52 134h2v1h-2zM62 134h1v1h-1zM66 134h1v1h-1zM68 134h1v1h-1zM72 134h1v1h-1zM88 134h2v1h-2zM91 134h1v1h-1zM98 134h1v1h-1zM111 134h1v1h-1zM129 134h1v1h-1zM138 134h1v1h-1zM29 135h1v1h-1zM36 135h1v1h-1zM40 135h2v1h-2zM50 135h1v1h-1zM58 135h1v1h-1zM62 135h2v1h-2zM66 135h1v1h-1zM70 135h1v1h-1zM76 135h1v1h-1zM88 135h1v1h-1zM96 135h1v1h-1zM114 135h1v1h-1zM116 135h1v1h-1zM132 135h1v1h-1zM43 136h1v1h-1zM47 136h1v1h-1zM54 136h1v1h-1zM56 136h1v1h-1zM59 136h1v1h-1zM61 136h1v1h-1zM65 136h2v1h-2zM70 136h1v1h-1zM72 136h1v1h-1zM75 136h1v1h-1zM77 136h1v1h-1zM81 136h1v1h-1zM84 136h1v1h-1zM86 136h1v1h-1zM106 136h1v1h-1zM110 136h2v1h-2zM116 136h1v1h-1zM120 136h1v1h-1zM41 137h1v1h-1zM48 137h1v1h-1zM58 137h1v1h-1zM68 137h1v1h-1zM79 137h1v1h-1zM97 137h1v1h-1zM104 137h2v1h-2zM110 137h1v1h-1zM118 137h1v1h-1zM123 137h1v1h-1zM128 137h1v1h-1zM139 137h1v1h-1zM38 138h1v1h-1zM43 138h1v1h-1zM45 138h1v1h-1zM47 138h1v1h-1zM50 138h1v1h-1zM58 138h2v1h-2zM71 138h2v1h-2zM82 138h1v1h-1zM85 138h1v1h-1zM87 138h1v1h-1zM96 138h1v1h-1zM108 138h1v1h-1zM133 138h2v1h-2zM45 139h2v1h-2zM49 139h2v1h-2zM52 139h3v1h-3zM56 139h1v1h-1zM60 139h2v1h-2zM64 139h1v1h-1zM66 139h1v1h-1zM68 139h1v1h-1zM75 139h1v1h-1zM86 139h1v1h-1zM112 139h1v1h-1zM126 139h1v1h-1zM133 139h1v1h-1zM137 139h1v1h-1z"/>
<path fill="#ffffff" d="M0 0h1v1h-1zM1 1h1v1h-1zM2 2h1v1h-1zM3 3h1v1h-1zM4 4h1v1h-1zM5 5h1v1h-1zM6 6h1v1h-1zM7 7h1v1h-1zM8 8h1v1h-1zM9 9h1v1h-1zM10 10h1v1h-1zM11 11h1v1h-1zM12 12h1v1h-1zM13 13h1v1h-1zM14 14h1v1h-1zM15 15h1v1h-1zM16 16h1v1h-1zM17 17h1v1h-1zM18 18h1v1h-1zM19 19h1v1h-1zM20 20h1v1h-1zM21 21h1v1h-1zM22 22h1v1h-1zM23 23h1v1h-1zM24 24h1v1h-1zM25 25h1v1h-1zM26 26h1v1h-1zM27 27h1v1h-1zM28 28h1v1h-1zM29 29h1v1h-1zM30 30h1v1h-1zM31 31h1v1h-1zM32 32h1v1h-1zM33 33h1v1h-1zM34 34h1v1h-1zM35 35h1v1h-1zM36 36h1v1h-1zM37 37h1v1h-1zM38 38h1v1h-1zM39 39h1v1h-1zM40 40h1v1h-1zM41 41h1v1h-1zM42 42h1v1h-1zM43 43h1v1h-1zM44 44h1v1h-1zM45 45h1v1h-1zM46 46h1v1h-1zM47 47h1v1h-1zM48 48h1v1h-1zM49 49h1v1h-1zM50 50h1v1h-1zM51 51h1v1h-1zM52 52h1v1h-1zM53 53h1v1h-1zM54 54h1v1h-1zM55 55h1v1h-1zM56 56h1v1h-1zM57 57h1v1h-1zM58 58h1v1h-1zM59 59h1v1h-1zM60 60h1v1h-1zM61 61h1v1h-1zM62 62h1v1h-1zM63 63h1v1h-1zM64 64h1v1h-1zM65 65h1v1h-1zM66 66h1v1h-1zM67 67h1v1h-1zM68 68h1v1h-1zM69 69h1v1h-1zM70 70h1v1h-1zM71 71h1v1h-1zM72 72h1v1h-1zM73 73h1v1h-1zM74 74h1v1h-1zM75 75h1v1h-1zM76 76h1v1h-1zM77 77h1v1h-1zM78 78h1v1h-1zM79 79h1v1h-1zM80 80h1v1h-1zM81 81h1v1h-1zM82 82h1v1h-1zM83 83h1v1h-1zM84 84h1v1h-1zM85 85h1v1h-1zM86 86h1v1h-1zM87 87h1v1h-1zM88 88h1v1h-1zM89 89h1v1h-1zM90 90h1v1h-1zM91 91h1v1h-1zM92 92h1v1h-1zM93 93h1v1h-1zM94 94h1v1h-1zM95 95h1v1h-1zM96 96h1v1h-1zM97 97h1v1h-1zM98 98h1v1h-1zM99 99h1v1h-1zM100 100h1v1h-1zM101 101h1v1h-1zM102 102h1v1h-1zM103 103h1v1h-1zM104 104h1v1h-1zM105 105h1v1h-1zM106 106h1v1h-1zM107 107h1v1h-1zM108 108h1v1h-1zM109 109h1v1h-1zM110 110h1v1h-1zM111 111h1v1h-1zM112 112h1v1h-1zM113 113h1v1h-1zM114 114h1v1h-1zM115 115h1v1h-1zM116 116h1v1h-1zM117 117h1v1h-1zM118 118h1v1h-1zM119 119h1v1h-1zM120 120h1v1h-1zM121 121h1v1h-1zM122 122h1v1h-1zM123 123h1v1h-1zM124 124h1v1h-1zM125 125h1v1h-1zM126 126h1v1h-1zM127 127h1v1h-1zM128 128h1v1h-1zM129 129h1v1h-1zM130 130h1v1h-1zM131 131h1v1h-1zM132 132h1v1h-1zM133 133h1v1h-1zM134 134h1v1h-1zM135 135h1v1h-1zM136 136h1v1h-1zM137 137h1v1h-1zM138 138h1v1h-1zM139 139h1v1h-1z"/>
</g>
<rect x="441" y="52" width="28" height="436" fill="#007878"/>
<rect x="60" y="125" width="1" height="355" fill="#fff"/>
<rect x="52" y="249.9" width="8" height="1" fill="#fff"/>
<text class="s" x="47.8" y="254.7" text-anchor="end" font-size="13" fill="#fff">50</text>
<rect x="52" y="377.1" width="8" height="1" fill="#fff"/>
<text class="s" x="47.8" y="381.9" text-anchor="end" font-size="13" fill="#fff">100</text>
<rect x="84" y="107" width="343" height="1" fill="#fff"/>
<rect x="204.9" y="99" width="1" height="8" fill="#fff"/>
<text class="s" x="205.4" y="94" text-anchor="middle" font-size="13" fill="#fff">50</text>
<rect x="328.2" y="99" width="1" height="8" fill="#fff"/>
<text class="s" x="328.7" y="94" text-anchor="middle" font-size="13" fill="#fff">100</text>
<text class="s" x="232.5" y="72.1" text-anchor="middle" font-size="14.5" font-weight="bold" fill="#fff">Pairwise P value map</text>
<text class="s" font-size="20" font-weight="bold" fill="#000" text-anchor="middle"><tspan x="694.2" y="79.9">Red pair % histogram</tspan><tspan x="694.2" y="102.8">(Lines represent average, ±1</tspan><tspan x="694.2" y="125.7">SD)</tspan></text>
<rect x="544" y="135" width="301" height="295" fill="#fff"/>
<rect x="546" y="137" width="297" height="291" fill="#000"/>
<path d="M550.5 137V428M560.5 137V428M570.5 137V428M580.5 137V428M590.5 137V428M600.5 137V428M610.5 137V428M620.5 137V428M629.5 137V428M639.5 137V428M649.5 137V428M659.5 137V428M669.5 137V428M679.5 137V428M689.5 137V428M699.5 137V428M709.5 137V428M719.5 137V428M729.5 137V428M739.5 137V428M749.5 137V428M759.5 137V428M768.5 137V428M778.5 137V428M788.5 137V428M798.5 137V428M808.5 137V428M818.5 137V428M828.5 137V428M546 423.5H843M546 410.5H843M546 396.5H843M546 383.5H843M546 370.5H843M546 357.5H843M546 343.5H843M546 330.5H843M546 317.5H843M546 304.5H843M546 290.5H843M546 277.5H843M546 264.5H843M546 251.5H843M546 237.5H843M546 224.5H843M546 211.5H843M546 198.5H843M546 184.5H843M546 171.5H843M546 158.5H843M546 145.5H843" stroke="#ececec" stroke-width="1" stroke-dasharray="3 3" fill="none" shape-rendering="crispEdges"/>
<path fill="#ff0000" d="M551.00 423.4V167.84H552.99V423.4zM552.99 423.4V167.84H554.97V423.4zM554.97 423.4V177.39H556.96V423.4zM556.96 423.4V175.53H558.94V423.4zM558.94 423.4V186.93H560.93V423.4zM560.92 423.4V177.39H562.91V423.4zM562.91 423.4V188.79H564.89V423.4zM564.89 423.4V190.64H566.88V423.4zM566.88 423.4V194.62H568.87V423.4zM568.87 423.4V177.39H570.85V423.4zM570.85 423.4V192.50H572.84V423.4zM572.84 423.4V198.33H574.82V423.4zM574.82 423.4V205.75H576.81V423.4zM576.80 423.4V199.92H578.79V423.4zM578.79 423.4V205.75H580.77V423.4zM580.77 423.4V199.92H582.76V423.4zM582.76 423.4V205.75H584.75V423.4zM584.75 423.4V222.45H586.73V423.4zM586.73 423.4V198.33H588.72V423.4zM588.72 423.4V199.92H590.70V423.4zM590.70 423.4V229.61H592.69V423.4zM592.68 423.4V226.96H594.67V423.4zM594.67 423.4V221.13H596.65V423.4zM596.65 423.4V226.96H598.64V423.4zM598.64 423.4V218.48H600.62V423.4zM600.62 423.4V213.18H602.61V423.4zM602.61 423.4V225.11H604.60V423.4zM604.60 423.4V226.96H606.58V423.4zM606.58 423.4V281.84H608.57V423.4zM608.57 423.4V263.01H610.55V423.4zM610.55 423.4V264.07H612.53V423.4zM612.53 423.4V226.96H614.52V423.4zM614.52 423.4V249.76H616.50V423.4zM616.50 423.4V205.75H618.49V423.4zM618.49 423.4V220.60H620.48V423.4zM620.48 423.4V220.60H622.46V423.4zM622.46 423.4V290.05H624.45V423.4zM624.44 423.4V272.29H626.43V423.4zM626.43 423.4V266.99H628.41V423.4zM628.41 423.4V250.02H630.40V423.4zM630.40 423.4V321.60H632.38V423.4zM632.38 423.4V236.24H634.37V423.4zM634.37 423.4V289.79H636.36V423.4zM636.36 423.4V285.81H638.34V423.4zM638.34 423.4V330.08H640.33V423.4zM640.33 423.4V308.88H642.31V423.4zM642.31 423.4V283.69H644.29V423.4zM644.29 423.4V319.48H646.28V423.4zM646.28 423.4V294.83H648.26V423.4zM648.26 423.4V289.52H650.25V423.4zM650.25 423.4V311.53H652.24V423.4zM652.24 423.4V315.24H654.22V423.4zM654.22 423.4V307.02H656.21V423.4zM656.21 423.4V338.57H658.19V423.4zM658.19 423.4V342.28H660.18V423.4zM660.17 423.4V336.71H662.16V423.4zM662.16 423.4V318.16H664.14V423.4zM664.14 423.4V312.06H666.13V423.4zM666.13 423.4V317.36H668.12V423.4zM668.12 423.4V346.26H670.10V423.4zM670.10 423.4V336.71H672.09V423.4zM672.09 423.4V331.15H674.07V423.4zM674.07 423.4V304.90H676.05V423.4zM676.05 423.4V338.57H678.04V423.4zM678.04 423.4V350.50H680.02V423.4zM680.02 423.4V343.34H682.01V423.4zM682.01 423.4V330.08H684.00V423.4zM684.00 423.4V343.34H685.98V423.4zM685.98 423.4V338.57H687.97V423.4zM687.97 423.4V338.57H689.95V423.4zM689.95 423.4V342.28H691.94V423.4zM691.93 423.4V307.02H693.92V423.4zM693.92 423.4V321.87H695.90V423.4zM695.90 423.4V324.78H697.89V423.4zM697.89 423.4V316.30H699.88V423.4zM699.88 423.4V330.08H701.86V423.4zM701.86 423.4V338.57H703.85V423.4zM703.85 423.4V319.75H705.83V423.4zM705.83 423.4V338.57H707.81V423.4zM707.82 423.4V346.26H709.80V423.4zM709.80 423.4V338.57H711.78V423.4zM711.78 423.4V319.75H713.77V423.4zM713.77 423.4V293.24H715.75V423.4zM715.75 423.4V350.50H717.74V423.4zM717.74 423.4V330.08H719.73V423.4zM719.73 423.4V329.29H721.71V423.4zM721.71 423.4V321.87H723.70V423.4zM723.69 423.4V334.59H725.68V423.4zM725.68 423.4V342.28H727.66V423.4zM727.66 423.4V333.27H729.65V423.4zM729.65 423.4V342.28H731.63V423.4zM731.63 423.4V325.31H733.62V423.4zM733.62 423.4V323.72H735.61V423.4zM735.61 423.4V341.22H737.59V423.4zM737.59 423.4V338.57H739.57V423.4zM739.58 423.4V336.71H741.56V423.4zM741.56 423.4V338.57H743.54V423.4zM743.54 423.4V308.88H745.53V423.4zM745.53 423.4V325.31H747.51V423.4zM747.51 423.4V342.28H749.50V423.4zM749.50 423.4V341.22H751.49V423.4zM751.49 423.4V320.54H753.47V423.4zM753.47 423.4V336.71H755.46V423.4zM755.45 423.4V294.83H757.44V423.4zM757.44 423.4V325.31H759.43V423.4zM759.42 423.4V334.59H761.41V423.4zM761.41 423.4V350.50H763.39V423.4zM763.39 423.4V349.44H765.38V423.4zM765.38 423.4V318.16H767.37V423.4zM767.37 423.4V319.75H769.35V423.4zM769.35 423.4V323.46H771.34V423.4zM771.34 423.4V314.44H773.32V423.4zM773.32 423.4V288.46H775.30V423.4zM775.30 423.4V277.06H777.29V423.4zM777.29 423.4V323.46H779.27V423.4zM779.27 423.4V320.54H781.26V423.4zM781.26 423.4V307.02H783.25V423.4zM783.25 423.4V305.17H785.23V423.4zM785.23 423.4V274.94H787.22V423.4zM787.21 423.4V304.11H789.20V423.4zM789.20 423.4V316.30H791.19V423.4zM791.18 423.4V311.26H793.17V423.4zM793.17 423.4V307.02H795.15V423.4zM795.15 423.4V334.59H797.14V423.4zM797.14 423.4V321.87H799.12V423.4zM799.12 423.4V304.11H801.11V423.4zM801.11 423.4V308.88H803.10V423.4zM803.10 423.4V316.30H805.08V423.4zM805.08 423.4V334.59H807.06V423.4zM807.07 423.4V293.24H809.05V423.4zM809.05 423.4V308.88H811.03V423.4zM811.03 423.4V311.26H813.02V423.4zM813.02 423.4V325.31H815.00V423.4zM815.00 423.4V323.46H816.99V423.4zM816.99 423.4V302.51H818.98V423.4zM818.97 423.4V329.29H820.96V423.4zM820.96 423.4V289.52H822.95V423.4zM822.94 423.4V306.76H824.93V423.4zM824.93 423.4V288.46H826.92V423.4zM826.91 423.4V288.46H828.90V423.4z" shape-rendering="crispEdges"/>
<path d="M551 237.5H829" stroke="#ffff00" stroke-width="1" stroke-dasharray="3 3" shape-rendering="crispEdges"/>
<path d="M551 291.5H829" stroke="#00ff00" stroke-width="1" stroke-dasharray="3 3" shape-rendering="crispEdges"/>
<path d="M551 344.5H829" stroke="#ffff00" stroke-width="1" stroke-dasharray="3 3" shape-rendering="crispEdges"/>
<rect x="541" y="142" width="1" height="281.6" fill="#000"/>
<rect x="533" y="423" width="8" height="1" fill="#000"/>
<text class="s" x="528.8" y="428.40" text-anchor="end" font-size="14" fill="#000">0</text>
<rect x="537" y="410" width="4" height="1" fill="#000"/>
<rect x="535" y="396" width="6" height="1" fill="#000"/>
<rect x="537" y="383" width="4" height="1" fill="#000"/>
<rect x="533" y="370" width="8" height="1" fill="#000"/>
<text class="s" x="528.8" y="375.38" text-anchor="end" font-size="14" fill="#000">20</text>
<rect x="537" y="357" width="4" height="1" fill="#000"/>
<rect x="535" y="343" width="6" height="1" fill="#000"/>
<rect x="537" y="330" width="4" height="1" fill="#000"/>
<rect x="533" y="317" width="8" height="1" fill="#000"/>
<text class="s" x="528.8" y="322.36" text-anchor="end" font-size="14" fill="#000">40</text>
<rect x="537" y="304" width="4" height="1" fill="#000"/>
<rect x="535" y="290" width="6" height="1" fill="#000"/>
<rect x="537" y="277" width="4" height="1" fill="#000"/>
<rect x="533" y="264" width="8" height="1" fill="#000"/>
<text class="s" x="528.8" y="269.34" text-anchor="end" font-size="14" fill="#000">60</text>
<rect x="537" y="251" width="4" height="1" fill="#000"/>
<rect x="535" y="237" width="6" height="1" fill="#000"/>
<rect x="537" y="224" width="4" height="1" fill="#000"/>
<rect x="533" y="211" width="8" height="1" fill="#000"/>
<text class="s" x="528.8" y="216.32" text-anchor="end" font-size="14" fill="#000">80</text>
<rect x="537" y="198" width="4" height="1" fill="#000"/>
<rect x="535" y="184" width="6" height="1" fill="#000"/>
<rect x="537" y="171" width="4" height="1" fill="#000"/>
<rect x="533" y="158" width="8" height="1" fill="#000"/>
<text class="s" x="528.8" y="163.30" text-anchor="end" font-size="14" fill="#000">100</text>
<rect x="537" y="145" width="4" height="1" fill="#000"/>
<rect x="550" y="432" width="281" height="1" fill="#000"/>
<rect x="550" y="432" width="1" height="9" fill="#000"/>
<text class="s" x="551.00" y="456" text-anchor="middle" font-size="14" fill="#000">0</text>
<rect x="560" y="432" width="1" height="5" fill="#000"/>
<rect x="570" y="432" width="1" height="7" fill="#000"/>
<rect x="580" y="432" width="1" height="5" fill="#000"/>
<rect x="590" y="432" width="1" height="9" fill="#000"/>
<text class="s" x="590.71" y="456" text-anchor="middle" font-size="14" fill="#000">20</text>
<rect x="600" y="432" width="1" height="5" fill="#000"/>
<rect x="610" y="432" width="1" height="7" fill="#000"/>
<rect x="620" y="432" width="1" height="5" fill="#000"/>
<rect x="629" y="432" width="1" height="9" fill="#000"/>
<text class="s" x="630.43" y="456" text-anchor="middle" font-size="14" fill="#000">40</text>
<rect x="639" y="432" width="1" height="5" fill="#000"/>
<rect x="649" y="432" width="1" height="7" fill="#000"/>
<rect x="659" y="432" width="1" height="5" fill="#000"/>
<rect x="669" y="432" width="1" height="9" fill="#000"/>
<text class="s" x="670.14" y="456" text-anchor="middle" font-size="14" fill="#000">60</text>
<rect x="679" y="432" width="1" height="5" fill="#000"/>
<rect x="689" y="432" width="1" height="7" fill="#000"/>
<rect x="699" y="432" width="1" height="5" fill="#000"/>
<rect x="709" y="432" width="1" height="9" fill="#000"/>
<text class="s" x="709.86" y="456" text-anchor="middle" font-size="14" fill="#000">80</text>
<rect x="719" y="432" width="1" height="5" fill="#000"/>
<rect x="729" y="432" width="1" height="7" fill="#000"/>
<rect x="739" y="432" width="1" height="5" fill="#000"/>
<rect x="749" y="432" width="1" height="9" fill="#000"/>
<text class="s" x="749.57" y="456" text-anchor="middle" font-size="14" fill="#000">100</text>
<rect x="759" y="432" width="1" height="5" fill="#000"/>
<rect x="768" y="432" width="1" height="7" fill="#000"/>
<rect x="778" y="432" width="1" height="5" fill="#000"/>
<rect x="788" y="432" width="1" height="9" fill="#000"/>
<text class="s" x="789.29" y="456" text-anchor="middle" font-size="14" fill="#000">120</text>
<rect x="798" y="432" width="1" height="5" fill="#000"/>
<rect x="808" y="432" width="1" height="7" fill="#000"/>
<rect x="818" y="432" width="1" height="5" fill="#000"/>
<rect x="828" y="432" width="1" height="9" fill="#000"/>
<text class="s" x="829.00" y="456" text-anchor="middle" font-size="14" fill="#000">140</text>
<text class="s" x="696.2" y="474.7" text-anchor="middle" font-size="16" font-weight="bold" fill="#000">Ref.</text>
<text class="s" transform="translate(499.1 282) rotate(-90)" x="0" y="0" text-anchor="middle" font-size="16" font-weight="bold" fill="#000">Red %</text>
<text class="s" x="1083.7" y="102.8" text-anchor="middle" font-size="20" font-weight="bold" fill="#000">Red cluster size histogram</text>
<rect x="934" y="112" width="299" height="318" fill="#fff"/>
<rect x="936" y="114" width="295" height="314" fill="#000"/>
<path d="M940.5 114V428M972.5 114V428M1005.5 114V428M1037.5 114V428M1070.5 114V428M1102.5 114V428M1135.5 114V428M1167.5 114V428M1200.5 114V428M936 423.5H1231M936 409.5H1231M936 396.5H1231M936 383.5H1231M936 369.5H1231M936 356.5H1231M936 342.5H1231M936 329.5H1231M936 316.5H1231M936 302.5H1231M936 289.5H1231M936 275.5H1231M936 262.5H1231M936 249.5H1231M936 235.5H1231M936 222.5H1231M936 208.5H1231M936 195.5H1231M936 182.5H1231M936 168.5H1231M936 155.5H1231M936 141.5H1231M936 128.5H1231" stroke="#ececec" stroke-width="1" stroke-dasharray="3 3" fill="none" shape-rendering="crispEdges"/>
<path d="M940 147V419.5L943.5 423.5" stroke="#ff0000" stroke-width="2.2" fill="none"/>
<path d="M1213 422.5L1217 421" stroke="#ff0000" stroke-width="1.5" fill="none"/>
<rect x="931" y="119" width="1" height="304.3" fill="#000"/>
<rect x="923" y="423" width="8" height="1" fill="#000"/>
<text class="s" x="918.9" y="428.30" text-anchor="end" font-size="14" fill="#000">0</text>
<rect x="927" y="409" width="4" height="1" fill="#000"/>
<rect x="927" y="396" width="4" height="1" fill="#000"/>
<rect x="927" y="383" width="4" height="1" fill="#000"/>
<rect x="927" y="369" width="4" height="1" fill="#000"/>
<rect x="923" y="356" width="8" height="1" fill="#000"/>
<text class="s" x="918.9" y="361.30" text-anchor="end" font-size="14" fill="#000">50</text>
<rect x="927" y="342" width="4" height="1" fill="#000"/>
<rect x="927" y="329" width="4" height="1" fill="#000"/>
<rect x="927" y="316" width="4" height="1" fill="#000"/>
<rect x="927" y="302" width="4" height="1" fill="#000"/>
<rect x="923" y="289" width="8" height="1" fill="#000"/>
<text class="s" x="918.9" y="294.30" text-anchor="end" font-size="14" fill="#000">100</text>
<rect x="927" y="275" width="4" height="1" fill="#000"/>
<rect x="927" y="262" width="4" height="1" fill="#000"/>
<rect x="927" y="249" width="4" height="1" fill="#000"/>
<rect x="927" y="235" width="4" height="1" fill="#000"/>
<rect x="923" y="222" width="8" height="1" fill="#000"/>
<text class="s" x="918.9" y="227.30" text-anchor="end" font-size="14" fill="#000">150</text>
<rect x="927" y="208" width="4" height="1" fill="#000"/>
<rect x="927" y="195" width="4" height="1" fill="#000"/>
<rect x="927" y="182" width="4" height="1" fill="#000"/>
<rect x="927" y="168" width="4" height="1" fill="#000"/>
<rect x="923" y="155" width="8" height="1" fill="#000"/>
<text class="s" x="918.9" y="160.30" text-anchor="end" font-size="14" fill="#000">200</text>
<rect x="927" y="141" width="4" height="1" fill="#000"/>
<rect x="927" y="128" width="4" height="1" fill="#000"/>
<rect x="940" y="432" width="276" height="1" fill="#000"/>
<rect x="940" y="432" width="1" height="9" fill="#000"/>
<text class="s" x="941.00" y="455.6" text-anchor="middle" font-size="14" fill="#000">0</text>
<rect x="972" y="432" width="1" height="7" fill="#000"/>
<rect x="1005" y="432" width="1" height="9" fill="#000"/>
<text class="s" x="1005.95" y="455.6" text-anchor="middle" font-size="14" fill="#000">1000</text>
<rect x="1037" y="432" width="1" height="7" fill="#000"/>
<rect x="1070" y="432" width="1" height="9" fill="#000"/>
<text class="s" x="1070.90" y="455.6" text-anchor="middle" font-size="14" fill="#000">2000</text>
<rect x="1102" y="432" width="1" height="7" fill="#000"/>
<rect x="1135" y="432" width="1" height="9" fill="#000"/>
<text class="s" x="1135.85" y="455.6" text-anchor="middle" font-size="14" fill="#000">3000</text>
<rect x="1167" y="432" width="1" height="7" fill="#000"/>
<rect x="1200" y="432" width="1" height="9" fill="#000"/>
<text class="s" x="1200.80" y="455.6" text-anchor="middle" font-size="14" fill="#000">4000</text>
<text class="s" x="1085.5" y="474.7" text-anchor="middle" font-size="16" font-weight="bold" fill="#000">Red cluster size</text>
<text class="s" transform="translate(889.5 270) rotate(-90)" x="0" y="0" text-anchor="middle" font-size="16" font-weight="bold" fill="#000">Count</text>
<rect x="1" y="498" width="1243" height="571" fill="#878282"/>
<rect x="3" y="500" width="1241" height="569" fill="#fff"/>
<g class="m" font-size="16.667" fill="#000">
<text x="7" y="514">Alpha is 0.01</text>
<text x="7" y="552">Pairwise P value map color definitions:</text>
<text x="7" y="571">  P is the pairwise P value as determined by a CorMap analysis</text>
<text x="7" y="590">  Green corresponds to         P &gt;= 0.05</text>
<text x="7" y="609">  Yellow corresponds to 0.05 &gt; P &gt;= 0.01</text>
<text x="7" y="628">  Red corresponds to    0.01 &gt; P</text>
<text x="7" y="647">Axes ticks correspond to Ref. as listed below</text>
<text x="7" y="685">P values:</text>
<text x="7" y="704">  50.1% green (40.5%) + yellow (9.6%) pairs</text>
<text x="7" y="723">  49.9% red pairs</text>
<text x="7" y="761">Average one-to-all P value 0.1261 ±0.06724 (53.3%) % red 49.9% ±20.1 (40.2%)</text>
<text x="7" y="780">Red cluster count 311, average size 15.63 ±239.82 (1534.6%), average size as pct of total area 0.2% ±2.5</text>
<text x="7" y="799">Red cluster maximum size 4231 (43.5%) has 1 occurrence and begins at [1,8].</text>
<text x="7" y="837"> Ref. : Time/Frame    Avg. P value    Min. P Value      % Red</text>
<text x="7" y="856">    1 : 1171            0.003468        1.819e-12        96.4%</text>
<text x="7" y="875">    2 : 1172            0.005624        1.819e-12        96.4%</text>
<text x="7" y="894">    3 : 1173            0.00995         5.457e-12        92.8%</text>
<text x="7" y="913">    4 : 1174            0.004969        1.819e-12        93.5%</text>
<text x="7" y="932">    5 : 1175            0.03206         1.819e-12        89.2%</text>
<text x="7" y="951">    6 : 1176            0.007193        1.819e-12        92.8%</text>
<text x="7" y="970">    7 : 1177            0.01503         5.457e-12        88.5%</text>
<text x="7" y="989">    8 : 1178            0.02229         1.455e-11        87.8%</text>
<text x="7" y="1008">    9 : 1179            0.02218         1.819e-12        86.3%</text>
<text x="7" y="1027">   10 : 1180            0.01983         1.819e-12        92.8%</text>
<text x="7" y="1046">   11 : 1181            0.04035         1.819e-12        87.1%</text>
<text x="7" y="1065">   12 : 1182            0.03107         1.819e-12        84.9%</text>
<text x="7" y="1084">   13 : 1183            0.03            1.819e-12        85.0%</text>
</g>
<rect x="1228" y="500" width="16" height="569" fill="#fff"/>
<rect x="1228" y="500" width="2" height="568" fill="#858080"/>
<rect x="1230" y="500" width="12" height="568" fill="#c6c6c6"/>
<path d="M1230.5 511 L1236 500.5 L1241.5 511 Z" fill="#c6c6c6"/>
<path d="M1230.5 511 L1236 500.5" stroke="#fff" stroke-width="1"/><path d="M1236 500.5 L1241.5 511 H1230.5" stroke="#808080" stroke-width="1" fill="none"/>
<rect x="1230" y="511" width="12" height="10" fill="#808080"/>
<rect x="1230" y="512" width="11" height="8" fill="#fff"/>
<rect x="1232" y="514" width="9" height="6" fill="#c6c6c6"/>
<path d="M1230.5 1057 L1236 1067.5 L1241.5 1057 Z" fill="#c6c6c6"/>
<path d="M1230.5 1056.5 H1241.5 M1230.5 1057 L1236 1067.5" stroke="#fff" stroke-width="1" fill="none"/><path d="M1236 1067.5 L1241.5 1057" stroke="#808080" stroke-width="1.2" fill="none"/>
<rect x="1" y="1069" width="1243" height="19" fill="#c6c6c6"/>
<rect x="1" y="1071.5" width="13" height="13" fill="#858080"/>
<rect x="1" y="1071.5" width="11.5" height="11.5" fill="#fff"/>
<rect x="3" y="1073" width="9.5" height="10" fill="#c6c6c6"/>
<text class="s" x="23" y="1083" font-size="13" fill="#000">Holm-Bonferroni adjusted P values</text>
<rect x="1" y="1088" width="1243" height="4" fill="#007878"/>
<rect x="1" y="1092" width="311" height="30" fill="#857b7b"/>
<rect x="1" y="1092" width="309" height="28" fill="#fff"/>
<rect x="3" y="1094" width="307" height="26" fill="#00e0e0"/>
<text class="s" x="156.5" y="1112" text-anchor="middle" font-size="16" fill="#000">Help</text>
<rect x="312" y="1092" width="311" height="30" fill="#857b7b"/>
<rect x="312" y="1092" width="309" height="28" fill="#fff"/>
<rect x="314" y="1094" width="307" height="26" fill="#00e0e0"/>
<text class="s" x="467.5" y="1112" text-anchor="middle" font-size="16" fill="#000">Save</text>
<rect x="623" y="1092" width="311" height="30" fill="#857b7b"/>
<rect x="623" y="1092" width="309" height="28" fill="#fff"/>
<rect x="625" y="1094" width="307" height="26" fill="#00e0e0"/>
<text class="s" x="778.5" y="1112" text-anchor="middle" font-size="16" fill="#000">Load</text>
<rect x="934" y="1092" width="311" height="30" fill="#857b7b"/>
<rect x="934" y="1092" width="309" height="28" fill="#fff"/>
<rect x="936" y="1094" width="307" height="26" fill="#00e0e0"/>
<text class="s" x="1089.5" y="1112" text-anchor="middle" font-size="16" fill="#000">Close</text>
<rect x="1" y="1122" width="1243" height="3" fill="#dcdad5"/>
<rect x="466" y="62" width="8" height="8" fill="#9a8f8f"/><rect x="466" y="62" width="7.5" height="7.5" fill="#fff"/>
<rect x="856" y="62" width="8" height="8" fill="#9a8f8f"/><rect x="856" y="62" width="7.5" height="7.5" fill="#fff"/>
<rect x="1224" y="489" width="8" height="8" fill="#9a8f8f"/><rect x="1224" y="489" width="7.5" height="7.5" fill="#fff"/>
</svg></body></html>
